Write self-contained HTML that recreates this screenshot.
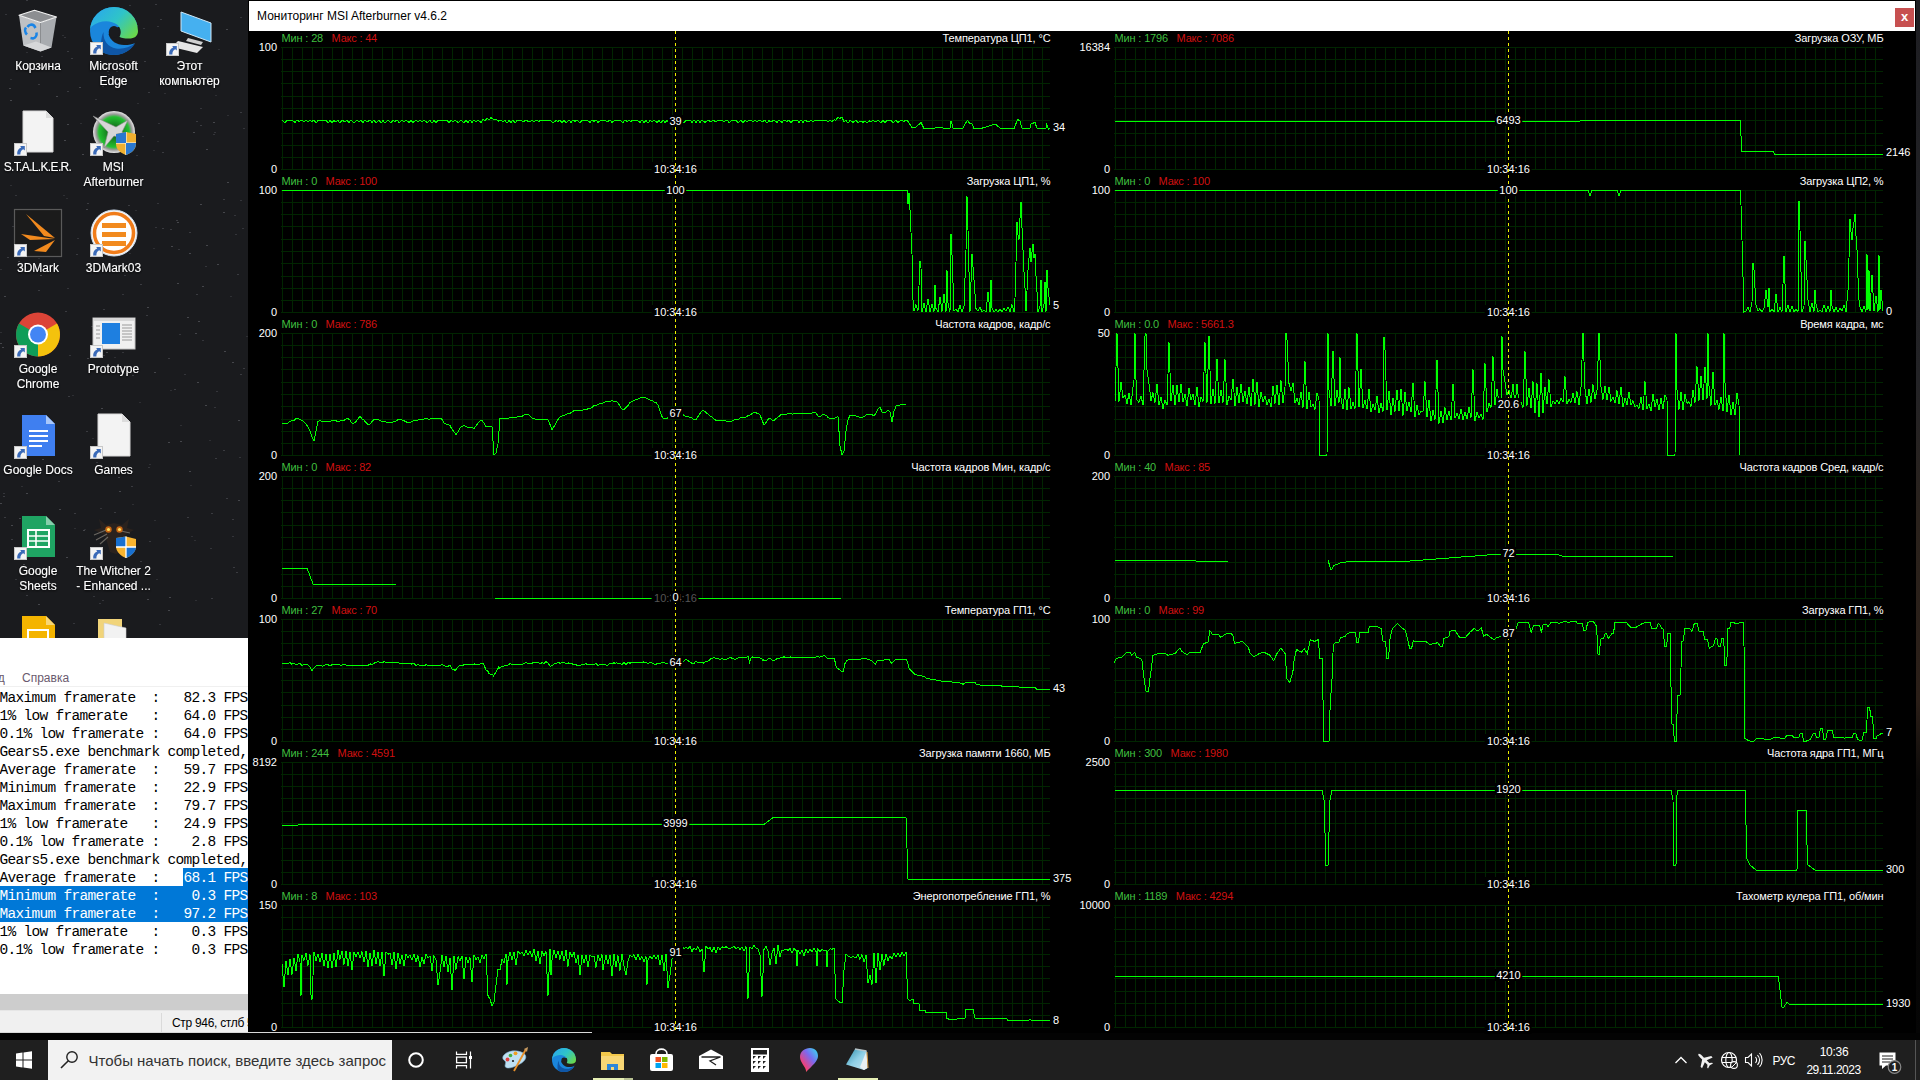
<!DOCTYPE html><html><head><meta charset="utf-8"><style>
*{margin:0;padding:0;box-sizing:border-box}
html,body{width:1920px;height:1080px;overflow:hidden;background:#030303}
body{position:relative;font-family:"Liberation Sans",sans-serif}
#desk{position:absolute;left:0;top:0;width:1920px;height:1033px;background:#1a1b1e}
#np{position:absolute;left:0;top:638px;width:592px;height:395px;background:#fff;overflow:hidden}
.npmenu{position:absolute;left:0;top:0;width:100%;height:49px;background:#fff;border-bottom:1px solid #f0f0f0}
.npmenu span{position:absolute;top:33px;font-size:12px;color:#6a5a6e;line-height:14px}
.npl{position:absolute;left:-0.5px;font-family:"Liberation Mono",monospace;font-size:14.5px;letter-spacing:-0.7px;line-height:18px;height:18px;color:#000;white-space:pre}
.npsel{position:absolute;background:#0078d7}
.npscroll{position:absolute;left:0;top:356px;width:100%;height:16px;background:#cdcdcd}
.npstatus{position:absolute;left:0;top:372px;width:100%;height:23px;background:#f0f0f0;border-top:1px solid #e6e6e6;border-bottom:1px solid #e3e3e3}
.npstatus span{position:absolute;left:172px;top:5px;font-size:12px;letter-spacing:-0.3px;color:#000;line-height:14px}
.npsep{position:absolute;left:161px;top:2px;width:1px;height:20px;background:#dadada}
#ab{position:absolute;left:248px;top:0;width:1668px;height:1033px;background:#000;border:1px solid #000}
#abtitle{position:absolute;left:0;top:0;width:100%;height:30px;background:#fff}
#abtitle span{position:absolute;left:8px;top:8px;font-size:12px;color:#000;line-height:14px}
#abclose{position:absolute;left:1646px;top:7px;width:19px;height:19px;background:#c75050;color:#fff;font-size:13px;font-weight:bold;text-align:center;line-height:17px}
#abcontent{position:absolute;left:0;top:0;width:1920px;height:1080px}
#tb{position:absolute;left:0;top:1040px;width:1920px;height:40px;background:#1f1f1f}
</style></head><body><div id="desk"><svg style="position:absolute;left:0;top:0" width="249" height="638" font-family="'Liberation Sans', sans-serif" font-size="12"><defs><linearGradient id="edg" x1="0" y1="0.2" x2="1" y2="0.8"><stop offset="0" stop-color="#2aa8ec"/><stop offset="0.5" stop-color="#2fc4c8"/><stop offset="1" stop-color="#6ad84a"/></linearGradient><linearGradient id="edg2" x1="0" y1="0" x2="1" y2="1"><stop offset="0" stop-color="#0c59a4"/><stop offset="1" stop-color="#1479d6"/></linearGradient><radialGradient id="msig" cx="0.5" cy="0.5" r="0.5"><stop offset="0" stop-color="#0e4a14"/><stop offset="0.72" stop-color="#22c030"/><stop offset="0.85" stop-color="#9a9a9a"/><stop offset="1" stop-color="#e8e8e8"/></radialGradient><filter id="tsh" x="-10%" y="-30%" width="120%" height="160%"><feDropShadow dx="0" dy="1" stdDeviation="0.8" flood-color="#000" flood-opacity="0.9"/></filter></defs><rect x="82" y="154" width="2" height="1" fill="#45464b"/><rect x="166" y="49" width="2" height="1" fill="#34353a"/><rect x="210" y="548" width="2" height="1" fill="#34353a"/><rect x="93" y="596" width="2" height="1" fill="#34353a"/><rect x="232" y="519" width="2" height="1" fill="#3a3b40"/><rect x="9" y="88" width="2" height="1" fill="#45464b"/><rect x="107" y="71" width="2" height="1" fill="#3a3b40"/><rect x="23" y="564" width="2" height="1" fill="#45464b"/><rect x="15" y="579" width="2" height="1" fill="#34353a"/><rect x="242" y="228" width="2" height="1" fill="#34353a"/><rect x="147" y="599" width="2" height="1" fill="#45464b"/><rect x="12" y="226" width="2" height="1" fill="#34353a"/><rect x="142" y="136" width="2" height="1" fill="#2e2f33"/><rect x="107" y="147" width="2" height="1" fill="#34353a"/><rect x="146" y="315" width="2" height="1" fill="#3a3b40"/><rect x="26" y="595" width="2" height="1" fill="#3a3b40"/><rect x="95" y="99" width="2" height="1" fill="#34353a"/><rect x="144" y="61" width="2" height="1" fill="#3a3b40"/><rect x="127" y="544" width="2" height="1" fill="#45464b"/><rect x="198" y="321" width="2" height="1" fill="#45464b"/><rect x="149" y="464" width="2" height="1" fill="#2e2f33"/><rect x="76" y="254" width="2" height="1" fill="#3a3b40"/><rect x="178" y="249" width="2" height="1" fill="#34353a"/><rect x="147" y="307" width="2" height="1" fill="#45464b"/><rect x="224" y="351" width="2" height="1" fill="#45464b"/><rect x="73" y="623" width="2" height="1" fill="#34353a"/><rect x="30" y="524" width="2" height="1" fill="#45464b"/><rect x="42" y="350" width="2" height="1" fill="#3a3b40"/><rect x="238" y="500" width="2" height="1" fill="#45464b"/><rect x="10" y="79" width="2" height="1" fill="#2e2f33"/><rect x="87" y="358" width="2" height="1" fill="#45464b"/><rect x="148" y="467" width="2" height="1" fill="#34353a"/><rect x="215" y="95" width="2" height="1" fill="#2e2f33"/><rect x="121" y="66" width="2" height="1" fill="#34353a"/><rect x="187" y="317" width="2" height="1" fill="#45464b"/><rect x="72" y="395" width="2" height="1" fill="#2e2f33"/><rect x="5" y="472" width="2" height="1" fill="#2e2f33"/><rect x="43" y="625" width="2" height="1" fill="#34353a"/><rect x="126" y="60" width="2" height="1" fill="#3a3b40"/><rect x="196" y="294" width="2" height="1" fill="#3a3b40"/><rect x="189" y="253" width="2" height="1" fill="#45464b"/><rect x="100" y="508" width="2" height="1" fill="#34353a"/><rect x="42" y="459" width="2" height="1" fill="#45464b"/><rect x="140" y="284" width="2" height="1" fill="#3a3b40"/><rect x="209" y="440" width="2" height="1" fill="#2e2f33"/><rect x="180" y="425" width="2" height="1" fill="#2e2f33"/><rect x="174" y="389" width="2" height="1" fill="#3a3b40"/><rect x="38" y="84" width="2" height="1" fill="#3a3b40"/><rect x="38" y="237" width="2" height="1" fill="#3a3b40"/><rect x="3" y="496" width="2" height="1" fill="#3a3b40"/><rect x="67" y="288" width="2" height="1" fill="#34353a"/><rect x="37" y="429" width="2" height="1" fill="#2e2f33"/><rect x="156" y="579" width="2" height="1" fill="#2e2f33"/><rect x="243" y="128" width="2" height="1" fill="#34353a"/><rect x="116" y="572" width="2" height="1" fill="#45464b"/><rect x="101" y="408" width="2" height="1" fill="#45464b"/><rect x="26" y="493" width="2" height="1" fill="#45464b"/><rect x="15" y="195" width="2" height="1" fill="#34353a"/><rect x="53" y="451" width="2" height="1" fill="#3a3b40"/><rect x="28" y="348" width="2" height="1" fill="#34353a"/><rect x="26" y="0" width="2" height="1" fill="#3a3b40"/><rect x="137" y="103" width="2" height="1" fill="#2e2f33"/><rect x="157" y="26" width="2" height="1" fill="#34353a"/><rect x="223" y="212" width="2" height="1" fill="#45464b"/><rect x="38" y="258" width="2" height="1" fill="#2e2f33"/><rect x="154" y="372" width="2" height="1" fill="#45464b"/><rect x="31" y="118" width="2" height="1" fill="#45464b"/><rect x="119" y="491" width="2" height="1" fill="#45464b"/><rect x="79" y="87" width="2" height="1" fill="#3a3b40"/><rect x="26" y="350" width="2" height="1" fill="#2e2f33"/><rect x="122" y="165" width="2" height="1" fill="#34353a"/><rect x="52" y="540" width="2" height="1" fill="#2e2f33"/><rect x="37" y="556" width="2" height="1" fill="#34353a"/><rect x="194" y="540" width="2" height="1" fill="#2e2f33"/><rect x="164" y="93" width="2" height="1" fill="#2e2f33"/><rect x="132" y="375" width="2" height="1" fill="#3a3b40"/><rect x="91" y="228" width="2" height="1" fill="#2e2f33"/><rect x="162" y="228" width="2" height="1" fill="#3a3b40"/><rect x="206" y="245" width="2" height="1" fill="#45464b"/><rect x="189" y="232" width="2" height="1" fill="#3a3b40"/><rect x="132" y="504" width="2" height="1" fill="#2e2f33"/><rect x="187" y="29" width="2" height="1" fill="#34353a"/><rect x="202" y="286" width="2" height="1" fill="#45464b"/><rect x="66" y="198" width="2" height="1" fill="#2e2f33"/><rect x="114" y="357" width="2" height="1" fill="#2e2f33"/><rect x="20" y="225" width="2" height="1" fill="#34353a"/><rect x="58" y="481" width="2" height="1" fill="#3a3b40"/><rect x="86" y="209" width="2" height="1" fill="#45464b"/><rect x="159" y="624" width="2" height="1" fill="#34353a"/><rect x="122" y="352" width="2" height="1" fill="#34353a"/><rect x="213" y="122" width="2" height="1" fill="#45464b"/><rect x="200" y="204" width="2" height="1" fill="#45464b"/><rect x="227" y="182" width="2" height="1" fill="#45464b"/><rect x="202" y="340" width="2" height="1" fill="#34353a"/><rect x="205" y="405" width="2" height="1" fill="#45464b"/><rect x="102" y="86" width="2" height="1" fill="#3a3b40"/><rect x="43" y="130" width="2" height="1" fill="#34353a"/><rect x="38" y="604" width="2" height="1" fill="#45464b"/><rect x="206" y="149" width="2" height="1" fill="#45464b"/><rect x="168" y="358" width="2" height="1" fill="#3a3b40"/><rect x="140" y="561" width="2" height="1" fill="#3a3b40"/><rect x="5" y="14" width="2" height="1" fill="#34353a"/><rect x="134" y="142" width="2" height="1" fill="#45464b"/><rect x="223" y="199" width="2" height="1" fill="#3a3b40"/><rect x="7" y="257" width="2" height="1" fill="#3a3b40"/><rect x="74" y="513" width="2" height="1" fill="#3a3b40"/><rect x="195" y="600" width="2" height="1" fill="#2e2f33"/><rect x="66" y="557" width="2" height="1" fill="#45464b"/><rect x="213" y="134" width="2" height="1" fill="#34353a"/><rect x="232" y="362" width="2" height="1" fill="#45464b"/><rect x="169" y="597" width="2" height="1" fill="#45464b"/><rect x="211" y="513" width="2" height="1" fill="#3a3b40"/><rect x="136" y="155" width="2" height="1" fill="#34353a"/><rect x="223" y="450" width="2" height="1" fill="#3a3b40"/><rect x="155" y="4" width="2" height="1" fill="#3a3b40"/><rect x="44" y="144" width="2" height="1" fill="#45464b"/><rect x="158" y="123" width="2" height="1" fill="#34353a"/><rect x="83" y="530" width="2" height="1" fill="#45464b"/><rect x="200" y="108" width="2" height="1" fill="#34353a"/><rect x="63" y="195" width="2" height="1" fill="#2e2f33"/><rect x="10" y="100" width="2" height="1" fill="#45464b"/><rect x="143" y="28" width="2" height="1" fill="#34353a"/><rect x="113" y="333" width="2" height="1" fill="#3a3b40"/><rect x="177" y="283" width="2" height="1" fill="#45464b"/><rect x="130" y="546" width="2" height="1" fill="#45464b"/><rect x="129" y="253" width="2" height="1" fill="#2e2f33"/><rect x="236" y="572" width="2" height="1" fill="#3a3b40"/><rect x="215" y="458" width="2" height="1" fill="#3a3b40"/><rect x="106" y="124" width="2" height="1" fill="#45464b"/><rect x="113" y="323" width="2" height="1" fill="#34353a"/><rect x="171" y="246" width="2" height="1" fill="#45464b"/><rect x="18" y="217" width="2" height="1" fill="#2e2f33"/><rect x="200" y="125" width="2" height="1" fill="#3a3b40"/><rect x="240" y="374" width="2" height="1" fill="#3a3b40"/><rect x="64" y="140" width="2" height="1" fill="#45464b"/><rect x="56" y="96" width="2" height="1" fill="#45464b"/><rect x="226" y="498" width="2" height="1" fill="#3a3b40"/><rect x="170" y="229" width="2" height="1" fill="#3a3b40"/><rect x="180" y="441" width="2" height="1" fill="#45464b"/><rect x="86" y="431" width="2" height="1" fill="#3a3b40"/><rect x="91" y="326" width="2" height="1" fill="#34353a"/><rect x="184" y="374" width="2" height="1" fill="#34353a"/><rect x="86" y="567" width="2" height="1" fill="#45464b"/><rect x="112" y="18" width="2" height="1" fill="#45464b"/><rect x="84" y="529" width="2" height="1" fill="#2e2f33"/><rect x="131" y="65" width="2" height="1" fill="#34353a"/><rect x="235" y="234" width="2" height="1" fill="#34353a"/><rect x="21" y="271" width="2" height="1" fill="#2e2f33"/><rect x="10" y="185" width="2" height="1" fill="#2e2f33"/><rect x="193" y="132" width="2" height="1" fill="#45464b"/><rect x="217" y="264" width="2" height="1" fill="#45464b"/><rect x="38" y="549" width="2" height="1" fill="#45464b"/><rect x="179" y="334" width="2" height="1" fill="#34353a"/><rect x="71" y="58" width="2" height="1" fill="#3a3b40"/><rect x="108" y="74" width="2" height="1" fill="#2e2f33"/><rect x="240" y="17" width="2" height="1" fill="#34353a"/><rect x="205" y="266" width="2" height="1" fill="#34353a"/><rect x="155" y="227" width="2" height="1" fill="#34353a"/><rect x="67" y="124" width="2" height="1" fill="#45464b"/><rect x="2" y="347" width="2" height="1" fill="#45464b"/><rect x="237" y="274" width="2" height="1" fill="#3a3b40"/><rect x="11" y="539" width="2" height="1" fill="#3a3b40"/><rect x="240" y="112" width="2" height="1" fill="#3a3b40"/><rect x="67" y="51" width="2" height="1" fill="#3a3b40"/><rect x="51" y="319" width="2" height="1" fill="#2e2f33"/><rect x="135" y="210" width="2" height="1" fill="#2e2f33"/><rect x="114" y="512" width="2" height="1" fill="#3a3b40"/><rect x="69" y="355" width="2" height="1" fill="#34353a"/><rect x="64" y="37" width="2" height="1" fill="#34353a"/><rect x="4" y="517" width="2" height="1" fill="#3a3b40"/><rect x="131" y="486" width="2" height="1" fill="#3a3b40"/><rect x="239" y="457" width="2" height="1" fill="#34353a"/><rect x="168" y="442" width="2" height="1" fill="#45464b"/><rect x="139" y="402" width="2" height="1" fill="#2e2f33"/><rect x="176" y="220" width="2" height="1" fill="#3a3b40"/><rect x="87" y="203" width="2" height="1" fill="#3a3b40"/><rect x="103" y="355" width="2" height="1" fill="#34353a"/><rect x="214" y="132" width="2" height="1" fill="#34353a"/><rect x="18" y="261" width="2" height="1" fill="#45464b"/><rect x="41" y="56" width="2" height="1" fill="#34353a"/><rect x="170" y="390" width="2" height="1" fill="#2e2f33"/><rect x="153" y="248" width="2" height="1" fill="#2e2f33"/><rect x="11" y="470" width="2" height="1" fill="#3a3b40"/><rect x="40" y="275" width="2" height="1" fill="#45464b"/><rect x="0" y="269" width="2" height="1" fill="#2e2f33"/><rect x="246" y="336" width="2" height="1" fill="#2e2f33"/><rect x="62" y="35" width="2" height="1" fill="#2e2f33"/><rect x="55" y="365" width="2" height="1" fill="#3a3b40"/><rect x="0" y="343" width="2" height="1" fill="#45464b"/><rect x="21" y="486" width="2" height="1" fill="#2e2f33"/><rect x="128" y="205" width="2" height="1" fill="#3a3b40"/><rect x="129" y="5" width="2" height="1" fill="#34353a"/><rect x="67" y="91" width="2" height="1" fill="#3a3b40"/><rect x="102" y="600" width="2" height="1" fill="#34353a"/><rect x="100" y="23" width="2" height="1" fill="#2e2f33"/><rect x="77" y="238" width="2" height="1" fill="#34353a"/><rect x="149" y="541" width="2" height="1" fill="#3a3b40"/><rect x="168" y="610" width="2" height="1" fill="#45464b"/><rect x="195" y="333" width="2" height="1" fill="#45464b"/><rect x="38" y="290" width="2" height="1" fill="#3a3b40"/><rect x="11" y="525" width="2" height="1" fill="#45464b"/><rect x="187" y="517" width="2" height="1" fill="#3a3b40"/><rect x="232" y="536" width="2" height="1" fill="#34353a"/><rect x="211" y="598" width="2" height="1" fill="#3a3b40"/><rect x="21" y="31" width="2" height="1" fill="#34353a"/><rect x="34" y="369" width="2" height="1" fill="#34353a"/><rect x="96" y="462" width="2" height="1" fill="#34353a"/><rect x="160" y="19" width="2" height="1" fill="#3a3b40"/><rect x="125" y="270" width="2" height="1" fill="#34353a"/><rect x="116" y="71" width="2" height="1" fill="#34353a"/><rect x="168" y="538" width="2" height="1" fill="#34353a"/><rect x="190" y="485" width="2" height="1" fill="#2e2f33"/><rect x="207" y="76" width="2" height="1" fill="#2e2f33"/><rect x="60" y="210" width="2" height="1" fill="#3a3b40"/><rect x="189" y="471" width="2" height="1" fill="#45464b"/><rect x="216" y="391" width="2" height="1" fill="#34353a"/><rect x="122" y="294" width="2" height="1" fill="#34353a"/><rect x="157" y="203" width="2" height="1" fill="#34353a"/><rect x="153" y="150" width="2" height="1" fill="#2e2f33"/><rect x="65" y="311" width="2" height="1" fill="#3a3b40"/><rect x="3" y="493" width="2" height="1" fill="#34353a"/><rect x="124" y="275" width="2" height="1" fill="#34353a"/><rect x="177" y="222" width="2" height="1" fill="#45464b"/><rect x="74" y="528" width="2" height="1" fill="#2e2f33"/><rect x="118" y="477" width="2" height="1" fill="#45464b"/><rect x="196" y="121" width="2" height="1" fill="#3a3b40"/><rect x="79" y="87" width="2" height="1" fill="#45464b"/><rect x="4" y="296" width="2" height="1" fill="#45464b"/><rect x="19" y="518" width="2" height="1" fill="#45464b"/><rect x="68" y="396" width="2" height="1" fill="#3a3b40"/><rect x="234" y="215" width="2" height="1" fill="#34353a"/><rect x="148" y="92" width="2" height="1" fill="#3a3b40"/><rect x="191" y="536" width="2" height="1" fill="#2e2f33"/><rect x="243" y="368" width="2" height="1" fill="#3a3b40"/><rect x="154" y="520" width="2" height="1" fill="#2e2f33"/><rect x="227" y="115" width="2" height="1" fill="#2e2f33"/><rect x="59" y="509" width="2" height="1" fill="#45464b"/><rect x="100" y="25" width="2" height="1" fill="#3a3b40"/><rect x="0" y="503" width="2" height="1" fill="#45464b"/><rect x="103" y="309" width="2" height="1" fill="#3a3b40"/><rect x="106" y="352" width="2" height="1" fill="#45464b"/><rect x="80" y="123" width="2" height="1" fill="#2e2f33"/><rect x="0" y="332" width="2" height="1" fill="#2e2f33"/><rect x="214" y="407" width="2" height="1" fill="#34353a"/><rect x="240" y="200" width="2" height="1" fill="#34353a"/><rect x="230" y="296" width="2" height="1" fill="#2e2f33"/><rect x="95" y="66" width="2" height="1" fill="#45464b"/><rect x="99" y="603" width="2" height="1" fill="#34353a"/><rect x="92" y="438" width="2" height="1" fill="#2e2f33"/><rect x="218" y="49" width="2" height="1" fill="#2e2f33"/><rect x="26" y="52" width="2" height="1" fill="#2e2f33"/><rect x="162" y="152" width="2" height="1" fill="#3a3b40"/><rect x="248" y="272" width="2" height="1" fill="#45464b"/><rect x="130" y="323" width="2" height="1" fill="#3a3b40"/><rect x="197" y="382" width="2" height="1" fill="#45464b"/><rect x="226" y="29" width="2" height="1" fill="#45464b"/><rect x="233" y="567" width="2" height="1" fill="#3a3b40"/><rect x="184" y="82" width="2" height="1" fill="#34353a"/><rect x="238" y="420" width="2" height="1" fill="#45464b"/><rect x="157" y="141" width="2" height="1" fill="#2e2f33"/><path d="M19 15.3 L40.5 22.5 L40.5 51.5 L23.3 45.5 Z" fill="#bfc1c4"/><path d="M40.5 22.5 L56.5 17 L51.5 47.5 L40.5 51.5 Z" fill="#a9acb0"/><path d="M19 15.3 L34.5 10.3 L56.5 17 L40.5 22.5 Z" fill="#8c8e91" stroke="#f2f2f2" stroke-width="1.2" stroke-linejoin="round"/><path d="M23.3 45.5 L36 41.5 L51.5 47.5 L40.5 51.5 Z" fill="#d6d7d9"/><path d="M27.5 27 C29 24.5 32 24 34 25.5 L35.5 28 M36.5 32.5 C37 35.5 35.5 38 33 38.5 L30.5 38 M27 34.5 C25 32.5 24.5 29.5 26 27.5" stroke="#1a84e6" stroke-width="2.6" fill="none"/><circle cx="114" cy="31" r="24" fill="#1a86dc"/><path d="M103.5 32 C103 41 108 47 116 48.5 C123 49.5 130 47 135 43.5 C130.5 51 122.5 55 114 55 C109 55 105 54 101.5 51.5 C100.5 45 101 37 103.5 32 Z" fill="#0f56a6"/><path d="M108.5 34 C110.5 41 116.5 45 124 45 C129 45 132.5 44.5 135.8 42.5 L139 36 L139 26 L118 27 Z" fill="#1a1b1e"/><path d="M90 31 A24 24 0 0 1 138 31 C138 36 134.5 38.5 129 38.5 C124 38.5 120.5 38 119.5 36.5 C121.5 34 121.5 28 117 24.5 C111 20 100 19.5 91.5 26.5 C90.8 27.8 90.3 29.3 90 31 Z" fill="url(#edg)"/><ellipse cx="114" cy="32" rx="5.3" ry="6" fill="#1a1b1e"/><g transform="translate(90,42)"><rect x="0.5" y="0.5" width="12" height="12" fill="#f4f4f4" stroke="#c8c8c8" stroke-width="1"/><path d="M3.2 11.5 C2.8 8 4.5 5.5 7.2 4.6 L6.2 3 H10.8 V7.6 L9.3 6.2 C7.3 7 6.2 9 6.4 11.5 Z" fill="#3a6ab8"/></g><path d="M181 12 L211 23 L211 42 L181 31 Z" fill="#45b0f0" stroke="#cfe8f8" stroke-width="1"/><path d="M178 41 L203 47 L197 53 L172 47 Z" fill="#e6e6e6"/><path d="M188 38 L203 42 L201 45 L186 41 Z" fill="#d0d0d0"/><g transform="translate(166,43)"><rect x="0.5" y="0.5" width="12" height="12" fill="#f4f4f4" stroke="#c8c8c8" stroke-width="1"/><path d="M3.2 11.5 C2.8 8 4.5 5.5 7.2 4.6 L6.2 3 H10.8 V7.6 L9.3 6.2 C7.3 7 6.2 9 6.4 11.5 Z" fill="#3a6ab8"/></g><path d="M23 111 H46 L53 118 V152 H23 Z" fill="#f3f3f3" stroke="#d8d8d8" stroke-width="1"/><path d="M46 111 V118 H53 Z" fill="#dcdcdc"/><g transform="translate(14,143)"><rect x="0.5" y="0.5" width="12" height="12" fill="#f4f4f4" stroke="#c8c8c8" stroke-width="1"/><path d="M3.2 11.5 C2.8 8 4.5 5.5 7.2 4.6 L6.2 3 H10.8 V7.6 L9.3 6.2 C7.3 7 6.2 9 6.4 11.5 Z" fill="#3a6ab8"/></g><circle cx="114" cy="132" r="21" fill="url(#msig)"/><path d="M93 116 L116 127 L128 120 L122 132 L130 140 L114 136 L104 148 L108 132 Z" fill="#d6d6d6" stroke="#888" stroke-width="0.6"/><path d="M116 134 L126 132 L136 134 L136 144 C136 150 131 153 126 155 C121 153 116 150 116 144 Z" fill="#f0b030"/><path d="M126 132 V155 M116 143 H136" stroke="#fff" stroke-width="1"/><path d="M116 134 L126 132 V143 H116 Z" fill="#2a78d0"/><path d="M126 143 H136 C136 150 131 153 126 155 Z" fill="#2a78d0"/><g transform="translate(90,143)"><rect x="0.5" y="0.5" width="12" height="12" fill="#f4f4f4" stroke="#c8c8c8" stroke-width="1"/><path d="M3.2 11.5 C2.8 8 4.5 5.5 7.2 4.6 L6.2 3 H10.8 V7.6 L9.3 6.2 C7.3 7 6.2 9 6.4 11.5 Z" fill="#3a6ab8"/></g><rect x="14.5" y="209.5" width="47" height="47" fill="#1b1b1b" stroke="#5a5a5a" stroke-width="1.2"/><path d="M26 214 L55 238 L44 236 Z" fill="#f28a1e"/><path d="M21 234 L55 239 L30 240 Z" fill="#f28a1e"/><path d="M34 251 L55 240 L46 252 Z" fill="#f28a1e"/><g transform="translate(14,244)"><rect x="0.5" y="0.5" width="12" height="12" fill="#f4f4f4" stroke="#c8c8c8" stroke-width="1"/><path d="M3.2 11.5 C2.8 8 4.5 5.5 7.2 4.6 L6.2 3 H10.8 V7.6 L9.3 6.2 C7.3 7 6.2 9 6.4 11.5 Z" fill="#3a6ab8"/></g><circle cx="114" cy="233" r="23" fill="#f5f5f5" stroke="#d0dff0" stroke-width="1"/><circle cx="114" cy="233" r="19.5" fill="#fff" stroke="#f07c1a" stroke-width="3.5"/><rect x="102" y="223" width="24" height="5" fill="#f28a1e"/><rect x="102" y="232" width="24" height="5" fill="#f28a1e"/><rect x="102" y="241" width="24" height="5" fill="#f28a1e"/><g transform="translate(90,244)"><rect x="0.5" y="0.5" width="12" height="12" fill="#f4f4f4" stroke="#c8c8c8" stroke-width="1"/><path d="M3.2 11.5 C2.8 8 4.5 5.5 7.2 4.6 L6.2 3 H10.8 V7.6 L9.3 6.2 C7.3 7 6.2 9 6.4 11.5 Z" fill="#3a6ab8"/></g><circle cx="38" cy="334.5" r="22" fill="#db4437"/><path d="M38 334.5 L57 323.5 A22 22 0 0 1 38 356.5 Z" fill="#f4c20d"/><path d="M38 334.5 L38 356.5 A22 22 0 0 1 19 323.5 Z" fill="#0f9d58"/><circle cx="38" cy="334.5" r="10" fill="#fff"/><circle cx="38" cy="334.5" r="8" fill="#4285f4"/><g transform="translate(14,345)"><rect x="0.5" y="0.5" width="12" height="12" fill="#f4f4f4" stroke="#c8c8c8" stroke-width="1"/><path d="M3.2 11.5 C2.8 8 4.5 5.5 7.2 4.6 L6.2 3 H10.8 V7.6 L9.3 6.2 C7.3 7 6.2 9 6.4 11.5 Z" fill="#3a6ab8"/></g><rect x="93" y="318" width="42" height="31" fill="#f0f0f0" stroke="#c4c4c4" stroke-width="1"/><rect x="93" y="318" width="42" height="3" fill="#d8d8d8"/><rect x="102" y="323" width="18" height="21" fill="#1e7fe0"/><path d="M96 326h4M96 330h4M96 334h4M96 338h4M122 325h10M122 328h10M122 331h10M122 334h10M122 337h10M122 340h10" stroke="#9a9a9a" stroke-width="1"/><g transform="translate(90,345)"><rect x="0.5" y="0.5" width="12" height="12" fill="#f4f4f4" stroke="#c8c8c8" stroke-width="1"/><path d="M3.2 11.5 C2.8 8 4.5 5.5 7.2 4.6 L6.2 3 H10.8 V7.6 L9.3 6.2 C7.3 7 6.2 9 6.4 11.5 Z" fill="#3a6ab8"/></g><path d="M22 415 H46 L55 424 V456 H22 Z" fill="#3f7ff0"/><path d="M46 415 V424 H55 Z" fill="#a8c7fa"/><path d="M29 431h19M29 436h19M29 441h19M29 446h13" stroke="#fff" stroke-width="2"/><g transform="translate(14,446)"><rect x="0.5" y="0.5" width="12" height="12" fill="#f4f4f4" stroke="#c8c8c8" stroke-width="1"/><path d="M3.2 11.5 C2.8 8 4.5 5.5 7.2 4.6 L6.2 3 H10.8 V7.6 L9.3 6.2 C7.3 7 6.2 9 6.4 11.5 Z" fill="#3a6ab8"/></g><path d="M98 414 H122 L130 422 V456 H98 Z" fill="#f3f3f3" stroke="#d8d8d8" stroke-width="1"/><path d="M122 414 V422 H130 Z" fill="#dcdcdc"/><g transform="translate(90,446)"><rect x="0.5" y="0.5" width="12" height="12" fill="#f4f4f4" stroke="#c8c8c8" stroke-width="1"/><path d="M3.2 11.5 C2.8 8 4.5 5.5 7.2 4.6 L6.2 3 H10.8 V7.6 L9.3 6.2 C7.3 7 6.2 9 6.4 11.5 Z" fill="#3a6ab8"/></g><path d="M22 516 H46 L55 525 V557 H22 Z" fill="#1fa463"/><path d="M46 516 V525 H55 Z" fill="#87ceac"/><rect x="28" y="530" width="21" height="17" fill="none" stroke="#fff" stroke-width="2"/><path d="M28 536h21M28 541h21M36 530v17" stroke="#fff" stroke-width="1.6"/><g transform="translate(14,547)"><rect x="0.5" y="0.5" width="12" height="12" fill="#f4f4f4" stroke="#c8c8c8" stroke-width="1"/><path d="M3.2 11.5 C2.8 8 4.5 5.5 7.2 4.6 L6.2 3 H10.8 V7.6 L9.3 6.2 C7.3 7 6.2 9 6.4 11.5 Z" fill="#3a6ab8"/></g><path d="M99 519 L106 525 L114 523 L122 525 L129 519 L127 528 L134 530 L125 535 L120 552 L116 554 L110 552 L105 535 L94 530 L101 528 Z" fill="#2a221e"/><path d="M94 535 L106 530 M96 540 L107 534 M100 544 L108 537 M130 533 L121 531" stroke="#6a6660" stroke-width="1.1"/><circle cx="108.5" cy="529.5" r="3.2" fill="#e07010" opacity="0.85"/><circle cx="108.5" cy="529.5" r="1.6" fill="#ffe060"/><circle cx="119.5" cy="529.5" r="3.2" fill="#e07010" opacity="0.85"/><circle cx="119.5" cy="529.5" r="1.6" fill="#ffe060"/><path d="M116 538 L126 536.5 L136 539 L136 546 C136 552 131 556 126 558 C121 556 116 552 116 546 Z" fill="#f8b430"/><path d="M116 538 L126 536.5 V547 H116 Z" fill="#1870d0"/><path d="M126 547 H136 C136 552 131 556 126 558 Z" fill="#1870d0"/><path d="M126 536.5 V558 M116 547 H136" stroke="#fff" stroke-width="1.3"/><g transform="translate(90,547)"><rect x="0.5" y="0.5" width="12" height="12" fill="#f4f4f4" stroke="#c8c8c8" stroke-width="1"/><path d="M3.2 11.5 C2.8 8 4.5 5.5 7.2 4.6 L6.2 3 H10.8 V7.6 L9.3 6.2 C7.3 7 6.2 9 6.4 11.5 Z" fill="#3a6ab8"/></g><path d="M22 616 H46 L55 625 V640 H22 Z" fill="#f4b400"/><path d="M46 616 V625 H55 Z" fill="#f8d675"/><rect x="28" y="630" width="20" height="10" fill="none" stroke="#fff" stroke-width="2"/><path d="M98 619 H122 V640 H98 Z" fill="#f1d47a"/><path d="M104 623 L126 628 V640 H104 Z" fill="#f2f2f2" stroke="#ccc" stroke-width="0.6"/><g fill="#fff" filter="url(#tsh)"><text x="38" y="69.5" text-anchor="middle">Корзина</text><text x="113.5" y="69.5" text-anchor="middle">Microsoft</text><text x="113.5" y="84.5" text-anchor="middle">Edge</text><text x="189.5" y="69.5" text-anchor="middle">Этот</text><text x="189.5" y="84.5" text-anchor="middle">компьютер</text><text x="37.5" y="170.5" text-anchor="middle" letter-spacing="-0.65">S.T.A.L.K.E.R.</text><text x="113.5" y="170.5" text-anchor="middle">MSI</text><text x="113.5" y="185.5" text-anchor="middle">Afterburner</text><text x="38" y="271.5" text-anchor="middle">3DMark</text><text x="113.5" y="271.5" text-anchor="middle">3DMark03</text><text x="38" y="372.5" text-anchor="middle">Google</text><text x="38" y="387.5" text-anchor="middle">Chrome</text><text x="113.5" y="372.5" text-anchor="middle">Prototype</text><text x="38" y="473.5" text-anchor="middle">Google Docs</text><text x="113.5" y="473.5" text-anchor="middle">Games</text><text x="38" y="574.5" text-anchor="middle">Google</text><text x="38" y="589.5" text-anchor="middle">Sheets</text><text x="113.5" y="574.5" text-anchor="middle">The Witcher 2</text><text x="113.5" y="589.5" text-anchor="middle">- Enhanced ...</text></g></svg></div><div style="position:absolute;left:1915px;top:0;width:5px;height:1033px;background:linear-gradient(#1e1e22 0px,#232326 380px,#2a221c 520px,#2b1f18 700px,#0c0a09 780px,#050505 1033px)"></div><div id="np"><div class="npmenu"><span style="left:-9px">ид</span><span style="left:22px">Справка</span></div><div class="npsel" style="top:230px;left:183px;width:66px;height:18px"></div><div class="npsel" style="top:248px;left:0;width:249px;height:36px"></div><div class="npl" style="top:51px">Maximum framerate  :   82.3 FPS</div><div class="npl" style="top:69px">1% low framerate   :   64.0 FPS</div><div class="npl" style="top:87px">0.1% low framerate :   64.0 FPS</div><div class="npl" style="top:105px">Gears5.exe benchmark completed,</div><div class="npl" style="top:123px">Average framerate  :   59.7 FPS</div><div class="npl" style="top:141px">Minimum framerate  :   22.9 FPS</div><div class="npl" style="top:159px">Maximum framerate  :   79.7 FPS</div><div class="npl" style="top:177px">1% low framerate   :   24.9 FPS</div><div class="npl" style="top:195px">0.1% low framerate :    2.8 FPS</div><div class="npl" style="top:213px">Gears5.exe benchmark completed,</div><div class="npl" style="top:231px">Average framerate  :   <span style="color:#fff">68.1 FPS</span></div><div class="npl" style="top:249px;color:#fff">Minimum framerate  :    0.3 FPS</div><div class="npl" style="top:267px;color:#fff">Maximum framerate  :   97.2 FPS</div><div class="npl" style="top:285px">1% low framerate   :    0.3 FPS</div><div class="npl" style="top:303px">0.1% low framerate :    0.3 FPS</div><div class="npscroll"></div><div class="npstatus"><div class="npsep"></div><span>Стр 946, стлб 5</span></div></div><div id="ab"><div id="abtitle"><span>Мониторинг MSI Afterburner v4.6.2</span><div id="abclose">x</div></div></div><svg style="position:absolute;left:0;top:0" width="1920" height="1080" font-family='"Liberation Sans", sans-serif' font-size="11"><path d="M281 47.5H1050M281 59.5H1050M281 71.5H1050M281 83.5H1050M281 96.5H1050M281 108.5H1050M281 120.5H1050M281 133.5H1050M281 145.5H1050M281 157.5H1050M281 169.5H1050M282.5 47V170M292.5 47V170M302.5 47V170M312.5 47V170M322.5 47V170M332.5 47V170M342.5 47V170M352.5 47V170M362.5 47V170M372.5 47V170M382.5 47V170M392.5 47V170M402.5 47V170M412.5 47V170M422.5 47V170M432.5 47V170M442.5 47V170M452.5 47V170M462.5 47V170M472.5 47V170M482.5 47V170M492.5 47V170M502.5 47V170M512.5 47V170M522.5 47V170M532.5 47V170M542.5 47V170M552.5 47V170M562.5 47V170M572.5 47V170M582.5 47V170M592.5 47V170M602.5 47V170M612.5 47V170M622.5 47V170M632.5 47V170M642.5 47V170M652.5 47V170M662.5 47V170M672.5 47V170M682.5 47V170M692.5 47V170M702.5 47V170M712.5 47V170M722.5 47V170M732.5 47V170M742.5 47V170M752.5 47V170M762.5 47V170M772.5 47V170M782.5 47V170M792.5 47V170M802.5 47V170M812.5 47V170M822.5 47V170M832.5 47V170M842.5 47V170M852.5 47V170M862.5 47V170M872.5 47V170M882.5 47V170M892.5 47V170M902.5 47V170M912.5 47V170M922.5 47V170M932.5 47V170M942.5 47V170M952.5 47V170M962.5 47V170M972.5 47V170M982.5 47V170M992.5 47V170M1002.5 47V170M1012.5 47V170M1022.5 47V170M1032.5 47V170M1042.5 47V170" stroke="#012501" stroke-width="1" fill="none" shape-rendering="crispEdges"/><polyline points="282.0,120.0 285.0,123.0 287.0,120.0 290.0,120.5 292.0,120.0 295.0,122.5 297.0,120.0 299.0,121.5 302.0,120.0 304.0,121.5 306.0,120.5 308.0,122.0 310.0,120.0 312.0,121.5 314.0,120.0 316.0,123.0 318.0,120.5 320.0,120.5 322.0,120.0 324.0,120.5 326.0,120.0 328.0,123.0 330.0,120.5 332.0,122.5 334.0,120.5 336.0,122.0 338.0,120.5 340.0,123.0 342.0,120.0 345.0,122.0 347.0,120.5 349.0,122.5 351.0,120.0 354.0,123.0 357.0,120.0 359.0,121.5 361.0,120.5 363.0,122.5 365.0,120.0 367.0,122.0 370.0,120.0 372.0,122.5 374.0,120.0 376.0,123.0 379.0,120.0 381.0,123.0 383.0,120.5 385.0,123.0 388.0,120.0 391.0,123.0 393.0,120.0 395.0,121.5 397.0,120.0 399.0,122.5 402.0,120.5 404.0,122.0 406.0,120.0 409.0,122.5 411.0,120.5 413.0,122.5 416.0,120.0 418.0,122.0 420.0,120.5 422.0,122.0 424.0,120.0 427.0,122.5 430.0,120.5 432.0,123.0 434.0,120.5 436.0,122.5 438.0,120.5 440.0,120.5 442.0,120.0 444.0,120.5 447.0,120.0 449.0,123.0 451.0,120.0 453.0,122.0 455.0,120.0 458.0,122.5 461.0,120.5 464.0,122.5 466.0,120.5 468.0,122.5 470.0,120.0 472.0,122.5 474.0,120.0 476.0,122.0 478.0,120.0 481.0,122.5 483.0,119.5 485.0,121.0 487.0,118.4 489.0,119.8 491.0,117.7 494.0,120.0 496.0,118.8 498.0,121.2 501.0,120.0 503.0,122.0 505.0,120.5 507.0,123.0 509.0,120.5 511.0,122.5 513.0,120.0 515.0,123.0 517.0,120.5 519.0,120.5 521.0,120.0 523.0,122.0 526.0,120.0 529.0,122.0 532.0,120.5 534.0,121.5 537.0,120.0 539.0,121.5 541.0,120.0 543.0,120.5 545.0,120.0 548.0,120.5 550.0,120.0 553.0,123.0 556.0,120.5 558.0,121.5 560.0,120.0 562.0,123.0 564.0,120.0 566.0,123.0 569.0,120.0 571.0,122.5 573.0,120.0 575.0,121.5 577.0,120.0 580.0,123.0 582.0,120.0 585.0,120.5 587.0,120.0 590.0,122.5 592.0,120.0 594.0,121.5 596.0,120.0 598.0,122.5 601.0,120.0 603.0,120.5 605.0,120.0 607.0,122.0 610.0,120.0 612.0,122.5 615.0,120.0 618.0,120.5 620.0,120.5 623.0,122.5 625.0,120.0 627.0,121.5 629.0,120.5 631.0,121.5 633.0,120.0 635.0,120.5 637.0,120.0 640.0,122.5 642.0,120.0 644.0,122.5 646.0,120.5 648.0,123.0 650.0,120.5 652.0,122.0 654.0,120.0 657.0,122.5 659.0,120.5 661.0,123.0 663.0,120.0 665.0,122.5 667.0,120.5 669.0,123.0 671.0,120.0 674.0,120.5 677.0,120.0 680.0,123.0 682.0,120.5 684.0,123.0 686.0,120.0 688.0,120.5 690.0,120.0 692.0,122.5 694.0,120.0 696.0,122.5 698.0,120.0 700.0,122.5 702.0,120.0 705.0,122.5 708.0,120.0 711.0,122.0 713.0,120.0 716.0,122.0 718.0,120.5 720.0,120.5 722.0,120.0 724.0,121.5 727.0,120.0 729.0,122.5 732.0,120.5 734.0,120.5 736.0,120.5 738.0,122.5 741.0,120.5 743.0,122.5 745.0,120.5 747.0,121.5 750.0,120.0 753.0,121.5 755.0,120.5 757.0,121.5 760.0,120.0 762.0,121.5 765.0,120.5 767.0,123.0 769.0,120.5 771.0,122.0 774.0,120.0 777.0,122.5 779.0,120.0 782.0,122.5 784.0,120.0 787.0,121.5 789.0,120.0 791.0,123.0 793.0,120.0 795.0,120.5 797.0,120.0 799.0,122.5 801.0,120.0 803.0,122.5 805.0,120.0 808.0,122.0 811.0,120.5 813.0,121.5 815.0,120.5 817.0,120.5 820.0,120.0 823.0,120.5 826.0,120.5 828.0,121.5 830.0,120.5 832.0,121.5 834.0,119.8 836.0,120.2 838.0,117.0 840.0,118.5 842.0,117.0 844.0,121.8 846.0,120.5 848.0,123.0 850.0,120.5 853.0,122.4 856.0,120.4 858.0,122.9 861.0,120.9 863.0,122.4 865.0,120.8 867.0,122.8 869.0,120.8 871.0,121.8 873.0,120.3 876.0,122.2 878.0,120.2 881.0,122.7 883.0,120.2 885.0,122.7 887.0,120.2 889.0,120.6 891.0,120.6 893.0,122.6 896.0,120.1 898.0,122.6 901.0,120.0 904.0,121.5 906.0,120.0 907.5,120.6 912.0,127.5 915.0,128.0 921.0,122.5 923.8,128.0 935.0,128.0 937.0,127.0 939.0,128.0 941.0,127.0 943.0,128.0 950.0,128.0 951.0,120.6 953.0,128.0 963.0,128.0 965.6,123.0 967.5,120.6 970.0,123.8 972.0,123.8 973.8,128.0 982.5,128.0 993.8,124.4 995.6,124.4 1000.0,128.0 1014.4,128.0 1017.5,119.4 1020.0,121.2 1021.9,128.0 1030.0,128.0 1031.0,123.8 1035.0,122.5 1036.9,128.0 1046.0,128.0 1046.5,124.4 1048.8,129.4 1050.0,128.0" fill="none" stroke="#00ff00" stroke-width="1" shape-rendering="crispEdges"/><text x="281.5" y="42" fill="#3fbf3f" letter-spacing="-0.15">Мин : 28</text><text x="331.6" y="42" fill="#d01010" letter-spacing="-0.2">Макс : 44</text><text x="1050.5" y="42" fill="#fff" text-anchor="end" letter-spacing="-0.12">Температура ЦП1, °С</text><text x="277" y="51" fill="#fff" text-anchor="end">100</text><text x="277" y="173" fill="#fff" text-anchor="end">0</text><rect x="651.6" y="162" width="46.9" height="14" fill="#000"/><text x="675.5" y="173" fill="#fff" text-anchor="middle">10:34:16</text><text x="1053" y="131" fill="#fff">34</text><path d="M281 190.5H1050M281 202.5H1050M281 214.5H1050M281 226.5H1050M281 239.5H1050M281 251.5H1050M281 263.5H1050M281 276.5H1050M281 288.5H1050M281 300.5H1050M281 312.5H1050M282.5 190V313M292.5 190V313M302.5 190V313M312.5 190V313M322.5 190V313M332.5 190V313M342.5 190V313M352.5 190V313M362.5 190V313M372.5 190V313M382.5 190V313M392.5 190V313M402.5 190V313M412.5 190V313M422.5 190V313M432.5 190V313M442.5 190V313M452.5 190V313M462.5 190V313M472.5 190V313M482.5 190V313M492.5 190V313M502.5 190V313M512.5 190V313M522.5 190V313M532.5 190V313M542.5 190V313M552.5 190V313M562.5 190V313M572.5 190V313M582.5 190V313M592.5 190V313M602.5 190V313M612.5 190V313M622.5 190V313M632.5 190V313M642.5 190V313M652.5 190V313M662.5 190V313M672.5 190V313M682.5 190V313M692.5 190V313M702.5 190V313M712.5 190V313M722.5 190V313M732.5 190V313M742.5 190V313M752.5 190V313M762.5 190V313M772.5 190V313M782.5 190V313M792.5 190V313M802.5 190V313M812.5 190V313M822.5 190V313M832.5 190V313M842.5 190V313M852.5 190V313M862.5 190V313M872.5 190V313M882.5 190V313M892.5 190V313M902.5 190V313M912.5 190V313M922.5 190V313M932.5 190V313M942.5 190V313M952.5 190V313M962.5 190V313M972.5 190V313M982.5 190V313M992.5 190V313M1002.5 190V313M1012.5 190V313M1022.5 190V313M1032.5 190V313M1042.5 190V313" stroke="#012501" stroke-width="1" fill="none" shape-rendering="crispEdges"/><polyline points="282.0,190.0 906.0,190.0 907.0,190.0 908.0,204.0 909.0,193.0 910.0,210.0 912.0,254.0 913.0,300.0 914.0,311.1 916.0,304.6 918.0,311.1 920.0,261.0 921.0,268.0 922.0,312.0 924.0,303.4 926.0,312.0 928.0,298.8 930.0,312.0 932.0,304.4 934.0,312.0 935.0,285.0 936.0,308.6 938.0,312.0 940.0,297.1 942.0,311.5 944.0,293.8 946.0,312.0 947.0,270.0 948.0,303.1 950.0,312.0 951.0,234.0 952.0,255.0 954.0,310.8 956.0,309.2 958.0,311.7 960.0,305.4 962.0,312.0 964.0,306.8 966.0,250.0 967.0,196.0 968.0,230.0 970.0,311.9 972.0,254.0 974.0,280.0 976.0,308.4 978.0,311.3 980.0,307.0 982.0,312.0 984.0,310.4 986.0,312.0 988.0,292.1 990.0,312.0 991.0,280.0 992.0,307.9 994.0,312.0 996.0,309.4 998.0,312.0 1000.0,309.3 1002.0,312.0 1004.0,308.1 1006.0,311.2 1008.0,306.7 1010.0,312.0 1012.0,304.6 1014.0,312.0 1015.0,298.0 1016.0,262.0 1017.0,222.0 1018.0,235.0 1019.0,240.0 1020.0,218.0 1021.0,202.0 1022.0,228.0 1023.0,250.0 1024.0,272.0 1025.0,288.0 1026.0,311.3 1028.0,270.0 1029.0,258.0 1030.0,248.0 1031.0,262.0 1032.0,252.0 1033.0,244.0 1034.0,258.0 1035.0,254.0 1036.0,276.0 1037.0,292.0 1038.0,312.0 1040.0,306.6 1041.0,280.0 1042.0,312.0 1044.0,304.4 1045.0,282.0 1046.0,312.0 1047.0,270.0 1048.0,288.2 1050.0,305.0" fill="none" stroke="#00ff00" stroke-width="1" shape-rendering="crispEdges"/><text x="281.5" y="185" fill="#3fbf3f" letter-spacing="-0.15">Мин : 0</text><text x="325.6" y="185" fill="#d01010" letter-spacing="-0.2">Макс : 100</text><text x="1050.5" y="185" fill="#fff" text-anchor="end" letter-spacing="-0.12">Загрузка ЦП1, %</text><text x="277" y="194" fill="#fff" text-anchor="end">100</text><text x="277" y="316" fill="#fff" text-anchor="end">0</text><rect x="651.6" y="305" width="46.9" height="14" fill="#000"/><text x="675.5" y="316" fill="#fff" text-anchor="middle">10:34:16</text><text x="1053" y="309" fill="#fff">5</text><path d="M281 333.5H1050M281 345.5H1050M281 357.5H1050M281 369.5H1050M281 382.5H1050M281 394.5H1050M281 406.5H1050M281 419.5H1050M281 431.5H1050M281 443.5H1050M281 455.5H1050M282.5 333V456M292.5 333V456M302.5 333V456M312.5 333V456M322.5 333V456M332.5 333V456M342.5 333V456M352.5 333V456M362.5 333V456M372.5 333V456M382.5 333V456M392.5 333V456M402.5 333V456M412.5 333V456M422.5 333V456M432.5 333V456M442.5 333V456M452.5 333V456M462.5 333V456M472.5 333V456M482.5 333V456M492.5 333V456M502.5 333V456M512.5 333V456M522.5 333V456M532.5 333V456M542.5 333V456M552.5 333V456M562.5 333V456M572.5 333V456M582.5 333V456M592.5 333V456M602.5 333V456M612.5 333V456M622.5 333V456M632.5 333V456M642.5 333V456M652.5 333V456M662.5 333V456M672.5 333V456M682.5 333V456M692.5 333V456M702.5 333V456M712.5 333V456M722.5 333V456M732.5 333V456M742.5 333V456M752.5 333V456M762.5 333V456M772.5 333V456M782.5 333V456M792.5 333V456M802.5 333V456M812.5 333V456M822.5 333V456M832.5 333V456M842.5 333V456M852.5 333V456M862.5 333V456M872.5 333V456M882.5 333V456M892.5 333V456M902.5 333V456M912.5 333V456M922.5 333V456M932.5 333V456M942.5 333V456M952.5 333V456M962.5 333V456M972.5 333V456M982.5 333V456M992.5 333V456M1002.5 333V456M1012.5 333V456M1022.5 333V456M1032.5 333V456M1042.5 333V456" stroke="#012501" stroke-width="1" fill="none" shape-rendering="crispEdges"/><polyline points="282.0,423.6 284.0,423.4 286.0,423.8 288.0,422.9 290.0,421.3 292.0,420.8 294.0,420.3 296.0,418.7 298.0,418.6 300.0,419.7 302.0,420.3 304.0,422.1 306.0,424.3 308.0,426.7 310.0,431.1 312.0,436.8 314.0,440.8 316.0,431.0 318.0,421.4 320.0,420.7 322.0,421.6 324.0,421.5 326.0,421.1 328.0,421.3 330.0,421.4 332.0,420.6 334.0,420.9 336.0,420.8 338.0,421.6 340.0,420.9 342.0,420.9 344.0,420.4 346.0,419.1 348.0,418.5 350.0,420.2 352.0,423.2 354.0,423.2 356.0,421.7 358.0,418.7 360.0,416.2 362.0,418.8 364.0,420.1 366.0,422.6 368.0,424.4 370.0,423.9 372.0,421.7 374.0,419.7 376.0,419.0 378.0,419.3 380.0,420.8 382.0,421.4 384.0,421.0 386.0,422.0 388.0,422.3 390.0,423.1 392.0,422.6 394.0,421.0 396.0,421.2 398.0,419.4 400.0,419.0 402.0,420.0 404.0,420.6 406.0,421.9 408.0,422.3 410.0,422.9 412.0,421.3 414.0,420.6 416.0,420.5 418.0,420.0 420.0,419.5 422.0,420.1 424.0,419.0 426.0,418.7 428.0,419.0 430.0,419.1 432.0,418.3 434.0,418.6 436.0,418.1 438.0,418.1 440.0,418.4 442.0,419.2 444.0,423.1 446.0,423.9 448.0,424.5 450.0,425.6 452.0,429.3 454.0,431.8 456.0,434.5 458.0,432.1 460.0,428.0 462.0,426.2 464.0,425.6 466.0,426.7 468.0,427.4 470.0,427.3 472.0,427.7 474.0,428.6 476.0,425.7 478.0,423.2 480.0,421.0 482.0,420.2 484.0,423.3 486.0,426.9 488.0,426.6 490.0,426.6 492.0,426.4 494.0,454.7 496.0,453.0 498.0,443.7 500.0,418.6 502.0,418.9 504.0,419.0 506.0,418.2 508.0,418.3 510.0,417.9 512.0,417.8 514.0,417.5 516.0,417.3 518.0,416.7 520.0,416.5 522.0,416.5 524.0,414.8 526.0,414.7 528.0,414.2 530.0,415.8 532.0,418.1 534.0,418.5 536.0,419.6 538.0,419.0 540.0,419.4 542.0,419.9 544.0,419.2 546.0,419.1 548.0,419.8 550.0,424.5 552.0,429.9 554.0,426.4 556.0,423.2 558.0,419.4 560.0,417.1 562.0,415.9 564.0,416.0 566.0,414.2 568.0,413.9 570.0,413.3 572.0,411.9 574.0,410.8 576.0,410.7 578.0,410.6 580.0,410.1 582.0,410.4 584.0,409.6 586.0,410.1 588.0,408.7 590.0,408.5 592.0,407.4 594.0,405.6 596.0,405.9 598.0,404.3 600.0,403.4 602.0,403.4 604.0,402.5 606.0,401.7 608.0,401.2 610.0,401.5 612.0,400.7 614.0,401.6 616.0,401.2 618.0,402.7 620.0,406.3 622.0,409.0 624.0,409.4 626.0,407.4 628.0,405.4 630.0,402.3 632.0,401.9 634.0,400.5 636.0,399.8 638.0,399.2 640.0,398.1 642.0,397.7 644.0,397.0 646.0,397.8 648.0,399.0 650.0,400.1 652.0,400.4 654.0,402.0 656.0,402.4 658.0,405.2 660.0,411.0 662.0,416.7 664.0,418.8 666.0,419.0 668.0,417.7 670.0,415.6 672.0,412.5 674.0,409.8 676.0,409.8 678.0,410.7 680.0,412.1 682.0,413.5 684.0,415.3 686.0,416.4 688.0,416.8 690.0,417.1 692.0,418.1 694.0,419.6 696.0,420.0 698.0,416.6 700.0,413.6 702.0,410.8 704.0,411.0 706.0,412.5 708.0,414.1 710.0,415.9 712.0,416.8 714.0,418.8 716.0,420.3 718.0,420.6 720.0,420.7 722.0,421.0 724.0,420.5 726.0,421.0 728.0,421.0 730.0,421.1 732.0,421.1 734.0,420.1 736.0,419.4 738.0,419.6 740.0,418.1 742.0,417.3 744.0,417.0 746.0,417.0 748.0,415.7 750.0,414.9 752.0,413.6 754.0,412.3 756.0,412.8 758.0,413.7 760.0,414.6 762.0,420.2 764.0,424.9 766.0,422.6 768.0,419.4 770.0,418.0 772.0,420.0 774.0,420.3 776.0,418.7 778.0,417.2 780.0,415.4 782.0,414.0 784.0,414.7 786.0,414.2 788.0,413.9 790.0,413.6 792.0,414.1 794.0,413.8 796.0,413.7 798.0,413.5 800.0,413.4 802.0,413.4 804.0,413.2 806.0,413.5 808.0,413.9 810.0,413.6 812.0,412.9 814.0,412.9 816.0,413.0 818.0,415.8 820.0,417.1 822.0,414.8 824.0,414.6 826.0,415.2 828.0,417.4 830.0,419.1 832.0,418.1 834.0,418.5 836.0,417.8 838.0,416.6 840.0,446.0 842.0,454.9 844.0,451.5 846.0,431.2 848.0,419.7 850.0,415.4 852.0,415.1 854.0,415.8 856.0,416.0 858.0,416.6 860.0,417.4 862.0,417.7 864.0,416.6 866.0,415.0 868.0,414.3 870.0,414.7 872.0,414.7 874.0,415.8 876.0,413.1 878.0,409.0 880.0,406.8 882.0,412.1 884.0,413.2 886.0,412.1 888.0,410.2 890.0,412.0 892.0,421.9 894.0,411.3 896.0,406.0 898.0,405.9 900.0,404.9 902.0,404.6 904.0,404.7 906.0,404.2" fill="none" stroke="#00ff00" stroke-width="1" shape-rendering="crispEdges"/><text x="281.5" y="328" fill="#3fbf3f" letter-spacing="-0.15">Мин : 0</text><text x="325.6" y="328" fill="#d01010" letter-spacing="-0.2">Макс : 786</text><text x="1050.5" y="328" fill="#fff" text-anchor="end" letter-spacing="-0.12">Частота кадров, кадр/с</text><text x="277" y="337" fill="#fff" text-anchor="end">200</text><text x="277" y="459" fill="#fff" text-anchor="end">0</text><rect x="651.6" y="448" width="46.9" height="14" fill="#000"/><text x="675.5" y="459" fill="#fff" text-anchor="middle">10:34:16</text><path d="M281 476.5H1050M281 488.5H1050M281 500.5H1050M281 512.5H1050M281 525.5H1050M281 537.5H1050M281 549.5H1050M281 562.5H1050M281 574.5H1050M281 586.5H1050M281 598.5H1050M282.5 476V599M292.5 476V599M302.5 476V599M312.5 476V599M322.5 476V599M332.5 476V599M342.5 476V599M352.5 476V599M362.5 476V599M372.5 476V599M382.5 476V599M392.5 476V599M402.5 476V599M412.5 476V599M422.5 476V599M432.5 476V599M442.5 476V599M452.5 476V599M462.5 476V599M472.5 476V599M482.5 476V599M492.5 476V599M502.5 476V599M512.5 476V599M522.5 476V599M532.5 476V599M542.5 476V599M552.5 476V599M562.5 476V599M572.5 476V599M582.5 476V599M592.5 476V599M602.5 476V599M612.5 476V599M622.5 476V599M632.5 476V599M642.5 476V599M652.5 476V599M662.5 476V599M672.5 476V599M682.5 476V599M692.5 476V599M702.5 476V599M712.5 476V599M722.5 476V599M732.5 476V599M742.5 476V599M752.5 476V599M762.5 476V599M772.5 476V599M782.5 476V599M792.5 476V599M802.5 476V599M812.5 476V599M822.5 476V599M832.5 476V599M842.5 476V599M852.5 476V599M862.5 476V599M872.5 476V599M882.5 476V599M892.5 476V599M902.5 476V599M912.5 476V599M922.5 476V599M932.5 476V599M942.5 476V599M952.5 476V599M962.5 476V599M972.5 476V599M982.5 476V599M992.5 476V599M1002.5 476V599M1012.5 476V599M1022.5 476V599M1032.5 476V599M1042.5 476V599" stroke="#012501" stroke-width="1" fill="none" shape-rendering="crispEdges"/><polyline points="282.0,568.0 307.0,568.0 310.0,576.0 313.0,584.0 396.0,584.0" fill="none" stroke="#00ff00" stroke-width="1" shape-rendering="crispEdges"/><polyline points="495.0,598.0 841.0,598.0" fill="none" stroke="#00ff00" stroke-width="1" shape-rendering="crispEdges"/><text x="281.5" y="471" fill="#3fbf3f" letter-spacing="-0.15">Мин : 0</text><text x="325.6" y="471" fill="#d01010" letter-spacing="-0.2">Макс : 82</text><text x="1050.5" y="471" fill="#fff" text-anchor="end" letter-spacing="-0.12">Частота кадров Мин, кадр/с</text><text x="277" y="480" fill="#fff" text-anchor="end">200</text><text x="277" y="602" fill="#fff" text-anchor="end">0</text><rect x="651.6" y="591" width="46.9" height="14" fill="#000"/><text x="675.5" y="602" fill="#555" text-anchor="middle">10:34:16</text><path d="M281 619.5H1050M281 631.5H1050M281 643.5H1050M281 655.5H1050M281 668.5H1050M281 680.5H1050M281 692.5H1050M281 705.5H1050M281 717.5H1050M281 729.5H1050M281 741.5H1050M282.5 619V742M292.5 619V742M302.5 619V742M312.5 619V742M322.5 619V742M332.5 619V742M342.5 619V742M352.5 619V742M362.5 619V742M372.5 619V742M382.5 619V742M392.5 619V742M402.5 619V742M412.5 619V742M422.5 619V742M432.5 619V742M442.5 619V742M452.5 619V742M462.5 619V742M472.5 619V742M482.5 619V742M492.5 619V742M502.5 619V742M512.5 619V742M522.5 619V742M532.5 619V742M542.5 619V742M552.5 619V742M562.5 619V742M572.5 619V742M582.5 619V742M592.5 619V742M602.5 619V742M612.5 619V742M622.5 619V742M632.5 619V742M642.5 619V742M652.5 619V742M662.5 619V742M672.5 619V742M682.5 619V742M692.5 619V742M702.5 619V742M712.5 619V742M722.5 619V742M732.5 619V742M742.5 619V742M752.5 619V742M762.5 619V742M772.5 619V742M782.5 619V742M792.5 619V742M802.5 619V742M812.5 619V742M822.5 619V742M832.5 619V742M842.5 619V742M852.5 619V742M862.5 619V742M872.5 619V742M882.5 619V742M892.5 619V742M902.5 619V742M912.5 619V742M922.5 619V742M932.5 619V742M942.5 619V742M952.5 619V742M962.5 619V742M972.5 619V742M982.5 619V742M992.5 619V742M1002.5 619V742M1012.5 619V742M1022.5 619V742M1032.5 619V742M1042.5 619V742" stroke="#012501" stroke-width="1" fill="none" shape-rendering="crispEdges"/><polyline points="282.0,663.0 282.0,664.0 284.0,663.9 286.0,663.7 288.0,663.6 290.0,662.4 292.0,664.3 293.0,663.2 294.0,663.4 296.0,664.8 298.0,664.1 300.0,663.5 301.0,664.7 302.0,665.7 304.0,664.7 306.0,664.7 307.7,664.7 308.0,665.1 310.0,666.8 312.0,670.5 312.0,670.5 314.0,668.1 315.7,666.0 316.0,666.0 318.0,665.7 320.0,665.4 322.0,666.1 324.0,665.9 325.2,664.7 326.0,664.7 328.0,664.7 330.0,665.8 332.0,664.8 334.0,663.9 336.0,664.9 338.0,664.9 340.0,665.0 342.0,665.0 344.0,664.0 346.0,665.1 348.0,666.1 350.0,665.1 352.0,665.2 354.0,665.2 356.0,665.2 358.0,665.3 360.0,665.3 362.0,665.4 364.0,665.4 364.6,665.4 366.0,665.0 368.0,665.4 370.0,663.9 372.0,664.3 374.0,663.7 374.8,662.5 376.0,662.5 378.0,661.5 380.0,662.5 382.0,662.5 383.5,662.5 384.0,661.5 386.0,662.6 388.0,662.7 390.0,662.9 392.0,662.0 394.0,663.1 396.0,662.2 398.0,662.3 400.0,663.4 402.0,663.5 404.0,663.6 406.0,663.7 408.0,663.8 410.0,662.9 411.3,664.0 412.0,663.1 414.0,663.3 416.0,665.5 418.0,664.6 420.0,665.8 422.0,665.0 424.0,665.2 425.8,665.4 426.0,664.4 428.0,665.4 430.0,665.4 432.0,665.4 434.0,665.4 436.0,665.4 438.0,665.4 440.0,665.4 442.0,664.4 444.0,665.4 446.0,666.4 448.0,666.4 449.2,665.4 450.0,665.1 452.0,668.9 454.0,669.6 455.0,670.5 456.0,669.4 458.0,667.2 458.6,666.6 460.0,665.4 462.0,666.0 464.0,664.7 466.0,664.4 468.0,664.0 470.0,664.7 472.0,664.3 474.0,664.0 474.0,665.0 476.0,664.0 478.0,664.0 480.0,664.0 482.0,663.0 483.4,664.0 484.0,665.1 486.0,669.8 488.0,671.5 488.5,673.4 490.0,674.1 492.0,674.1 493.6,675.9 494.0,675.2 496.0,671.8 498.0,668.3 498.0,669.3 500.0,667.4 501.7,666.6 502.0,666.5 504.0,666.1 506.0,665.6 508.0,665.1 510.0,663.6 511.9,664.2 512.0,664.2 514.0,664.1 516.0,664.0 518.0,664.9 520.0,664.8 522.0,664.7 524.0,663.6 526.0,662.5 528.0,663.4 530.0,663.3 532.0,663.2 532.3,663.2 534.0,662.1 536.0,663.0 538.0,661.9 540.0,663.8 542.0,662.7 544.0,663.6 546.0,661.5 546.9,662.5 548.0,662.8 550.0,666.0 550.5,666.6 552.0,665.5 554.0,664.1 554.2,664.0 556.0,663.4 558.0,662.7 558.8,662.5 560.0,663.5 562.0,662.5 564.0,662.5 566.0,663.5 568.0,663.5 568.2,662.5 570.0,663.3 572.0,663.1 573.3,664.7 574.0,664.7 576.0,664.7 578.0,665.7 580.0,665.7 582.0,664.7 584.0,664.7 586.0,663.7 588.0,664.7 590.0,664.7 592.0,664.7 593.8,664.7 594.0,664.7 596.0,663.6 598.0,665.5 600.0,664.4 602.0,664.3 604.0,664.2 606.0,665.1 608.0,665.0 610.0,663.0 612.0,663.9 614.0,662.8 615.6,663.7 616.0,662.7 618.0,663.6 620.0,663.6 622.0,664.5 624.0,662.4 626.0,664.4 628.0,662.3 630.0,663.3 632.0,662.2 634.0,663.1 636.0,662.1 638.0,663.0 640.0,662.9 642.0,662.9 644.0,661.8 644.8,662.8 646.0,661.8 648.0,663.9 650.0,662.0 652.0,663.1 654.0,664.2 656.0,664.2 658.0,663.3 660.0,663.4 662.0,662.5 664.0,662.5 666.0,663.6 668.0,663.7 668.0,663.7 670.0,664.2 672.0,662.7 674.0,661.2 675.0,662.0 676.0,661.8 678.0,661.3 680.0,660.8 682.0,660.3 682.0,661.3 684.0,661.3 686.0,659.3 687.8,660.3 688.0,660.5 690.0,662.2 690.0,662.2 692.0,663.3 694.0,663.5 694.4,662.5 696.0,661.5 698.0,662.4 700.0,662.3 702.0,662.3 704.0,663.2 704.6,662.2 706.0,661.3 708.0,661.0 710.0,659.7 710.4,658.4 712.0,658.4 714.0,657.4 716.0,658.4 718.0,658.4 720.0,659.4 722.0,658.4 724.0,659.4 726.0,659.4 728.0,658.4 728.0,658.4 730.0,657.3 732.0,658.2 734.0,659.1 736.0,659.0 738.0,657.9 740.0,657.8 742.0,657.7 744.0,657.6 746.0,657.5 748.0,656.4 748.3,657.4 749.5,662.2 750.0,660.9 751.2,657.8 752.0,656.8 754.0,657.8 756.0,657.8 758.0,657.8 760.0,657.8 760.0,657.8 762.0,659.1 762.2,660.3 764.0,659.9 766.0,660.5 768.0,659.1 768.8,658.9 770.0,658.4 772.0,660.1 772.4,660.3 774.0,660.8 776.0,659.2 778.0,658.5 780.0,657.9 780.4,657.8 782.0,657.8 784.0,656.8 786.0,657.8 788.0,657.8 789.2,657.8 790.0,656.8 792.0,657.7 794.0,657.7 796.0,657.6 798.0,657.6 800.0,657.5 802.0,657.5 804.0,657.4 806.0,657.3 808.0,657.3 810.0,657.2 812.0,657.2 814.0,657.1 816.0,657.1 818.0,656.0 819.0,657.0 820.0,657.0 824.6,655.6 827.0,658.2 834.3,658.2 836.3,667.3 841.5,671.2 843.4,671.2 844.7,664.0 847.3,660.2 851.2,659.5 859.0,659.5 865.0,658.2 870.8,660.2 873.0,662.0 875.3,664.0 877.3,660.8 882.5,660.2 889.0,659.5 891.6,663.4 895.5,659.5 906.6,659.5 909.2,668.6 915.0,674.5 924.2,676.5 926.8,678.4 934.6,679.7 945.0,681.7 958.0,682.3 963.2,684.3 965.8,682.3 975.0,682.3 976.2,684.5 984.0,685.6 999.7,685.6 1002.3,686.2 1015.3,686.9 1034.8,687.5 1036.8,689.5 1050.0,689.5" fill="none" stroke="#00ff00" stroke-width="1" shape-rendering="crispEdges"/><text x="281.5" y="614" fill="#3fbf3f" letter-spacing="-0.15">Мин : 27</text><text x="331.6" y="614" fill="#d01010" letter-spacing="-0.2">Макс : 70</text><text x="1050.5" y="614" fill="#fff" text-anchor="end" letter-spacing="-0.12">Температура ГП1, °С</text><text x="277" y="623" fill="#fff" text-anchor="end">100</text><text x="277" y="745" fill="#fff" text-anchor="end">0</text><rect x="651.6" y="734" width="46.9" height="14" fill="#000"/><text x="675.5" y="745" fill="#fff" text-anchor="middle">10:34:16</text><text x="1053" y="692" fill="#fff">43</text><path d="M281 762.5H1050M281 774.5H1050M281 786.5H1050M281 798.5H1050M281 811.5H1050M281 823.5H1050M281 835.5H1050M281 848.5H1050M281 860.5H1050M281 872.5H1050M281 884.5H1050M282.5 762V885M292.5 762V885M302.5 762V885M312.5 762V885M322.5 762V885M332.5 762V885M342.5 762V885M352.5 762V885M362.5 762V885M372.5 762V885M382.5 762V885M392.5 762V885M402.5 762V885M412.5 762V885M422.5 762V885M432.5 762V885M442.5 762V885M452.5 762V885M462.5 762V885M472.5 762V885M482.5 762V885M492.5 762V885M502.5 762V885M512.5 762V885M522.5 762V885M532.5 762V885M542.5 762V885M552.5 762V885M562.5 762V885M572.5 762V885M582.5 762V885M592.5 762V885M602.5 762V885M612.5 762V885M622.5 762V885M632.5 762V885M642.5 762V885M652.5 762V885M662.5 762V885M672.5 762V885M682.5 762V885M692.5 762V885M702.5 762V885M712.5 762V885M722.5 762V885M732.5 762V885M742.5 762V885M752.5 762V885M762.5 762V885M772.5 762V885M782.5 762V885M792.5 762V885M802.5 762V885M812.5 762V885M822.5 762V885M832.5 762V885M842.5 762V885M852.5 762V885M862.5 762V885M872.5 762V885M882.5 762V885M892.5 762V885M902.5 762V885M912.5 762V885M922.5 762V885M932.5 762V885M942.5 762V885M952.5 762V885M962.5 762V885M972.5 762V885M982.5 762V885M992.5 762V885M1002.5 762V885M1012.5 762V885M1022.5 762V885M1032.5 762V885M1042.5 762V885" stroke="#012501" stroke-width="1" fill="none" shape-rendering="crispEdges"/><polyline points="282.0,826.0 298.0,825.0 675.0,824.5 764.0,824.5 773.0,817.6 906.0,817.5 908.0,879.0 1050.0,879.0" fill="none" stroke="#00ff00" stroke-width="1" shape-rendering="crispEdges"/><text x="281.5" y="757" fill="#3fbf3f" letter-spacing="-0.15">Мин : 244</text><text x="337.6" y="757" fill="#d01010" letter-spacing="-0.2">Макс : 4591</text><text x="1050.5" y="757" fill="#fff" text-anchor="end" letter-spacing="-0.12">Загрузка памяти 1660, МБ</text><text x="277" y="766" fill="#fff" text-anchor="end">8192</text><text x="277" y="888" fill="#fff" text-anchor="end">0</text><rect x="651.6" y="877" width="46.9" height="14" fill="#000"/><text x="675.5" y="888" fill="#fff" text-anchor="middle">10:34:16</text><text x="1053" y="882" fill="#fff">375</text><path d="M281 905.5H1050M281 917.5H1050M281 929.5H1050M281 941.5H1050M281 954.5H1050M281 966.5H1050M281 978.5H1050M281 991.5H1050M281 1003.5H1050M281 1015.5H1050M281 1027.5H1050M282.5 905V1028M292.5 905V1028M302.5 905V1028M312.5 905V1028M322.5 905V1028M332.5 905V1028M342.5 905V1028M352.5 905V1028M362.5 905V1028M372.5 905V1028M382.5 905V1028M392.5 905V1028M402.5 905V1028M412.5 905V1028M422.5 905V1028M432.5 905V1028M442.5 905V1028M452.5 905V1028M462.5 905V1028M472.5 905V1028M482.5 905V1028M492.5 905V1028M502.5 905V1028M512.5 905V1028M522.5 905V1028M532.5 905V1028M542.5 905V1028M552.5 905V1028M562.5 905V1028M572.5 905V1028M582.5 905V1028M592.5 905V1028M602.5 905V1028M612.5 905V1028M622.5 905V1028M632.5 905V1028M642.5 905V1028M652.5 905V1028M662.5 905V1028M672.5 905V1028M682.5 905V1028M692.5 905V1028M702.5 905V1028M712.5 905V1028M722.5 905V1028M732.5 905V1028M742.5 905V1028M752.5 905V1028M762.5 905V1028M772.5 905V1028M782.5 905V1028M792.5 905V1028M802.5 905V1028M812.5 905V1028M822.5 905V1028M832.5 905V1028M842.5 905V1028M852.5 905V1028M862.5 905V1028M872.5 905V1028M882.5 905V1028M892.5 905V1028M902.5 905V1028M912.5 905V1028M922.5 905V1028M932.5 905V1028M942.5 905V1028M952.5 905V1028M962.5 905V1028M972.5 905V1028M982.5 905V1028M992.5 905V1028M1002.5 905V1028M1012.5 905V1028M1022.5 905V1028M1032.5 905V1028M1042.5 905V1028" stroke="#012501" stroke-width="1" fill="none" shape-rendering="crispEdges"/><polyline points="282.0,963.6 284.0,987.1 286.0,961.0 288.0,975.4 290.0,958.9 292.0,974.5 294.0,957.6 296.0,970.6 298.0,954.2 300.0,962.1 301.0,996.0 302.0,954.7 304.0,960.4 306.0,953.4 308.0,965.5 310.0,954.0 311.0,995.0 312.0,1000.0 314.0,951.7 316.0,960.5 318.0,954.4 320.0,962.0 322.0,953.4 324.0,966.1 326.0,953.9 328.0,967.7 330.0,953.8 332.0,968.0 334.0,953.3 336.0,966.9 338.0,950.5 340.0,959.4 342.0,951.3 344.0,964.5 346.0,951.0 348.0,965.8 350.0,951.8 352.0,969.8 354.0,952.5 356.0,956.6 358.0,952.1 360.0,958.1 362.0,951.6 364.0,962.3 366.0,951.4 368.0,966.8 370.0,952.6 372.0,965.9 374.0,949.6 376.0,964.3 378.0,952.4 380.0,965.9 382.0,951.7 384.0,976.4 386.0,952.2 388.0,954.2 390.0,953.3 392.0,965.3 394.0,952.3 396.0,969.1 398.0,952.8 400.0,963.7 402.0,954.8 404.0,965.9 406.0,954.0 408.0,957.4 410.0,955.2 412.0,960.0 414.0,954.0 416.0,961.6 418.0,955.6 420.0,966.7 422.0,956.6 424.0,964.3 426.0,954.0 428.0,957.8 430.0,955.8 432.0,970.7 434.0,955.6 436.0,960.2 438.0,985.0 440.0,972.5 442.0,955.3 444.0,966.7 446.0,956.0 448.0,972.1 450.0,958.2 452.0,990.0 454.0,955.8 456.0,969.5 458.0,956.6 460.0,961.1 462.0,956.0 464.0,979.3 466.0,956.6 468.0,962.8 470.0,957.5 472.0,982.0 474.0,954.8 476.0,959.7 478.0,957.0 480.0,962.6 482.0,954.9 484.0,958.9 486.0,953.7 488.0,995.4 490.0,999.3 492.0,1005.5 494.0,1001.9 496.0,984.8 498.0,969.6 500.0,969.9 502.0,959.3 504.0,963.0 506.0,953.9 507.0,985.0 508.0,960.5 510.0,952.1 512.0,959.7 514.0,951.9 516.0,965.4 518.0,951.0 520.0,953.8 522.0,952.3 524.0,955.9 526.0,950.5 528.0,954.9 530.0,951.2 532.0,957.1 534.0,949.0 536.0,961.2 538.0,950.9 540.0,964.4 542.0,950.8 544.0,956.1 546.0,951.2 548.0,996.0 550.0,948.7 551.0,975.0 552.0,960.4 554.0,950.5 556.0,957.7 558.0,950.6 560.0,959.4 562.0,951.2 564.0,961.1 566.0,950.3 568.0,966.6 570.0,952.1 572.0,957.0 574.0,952.3 576.0,962.9 578.0,954.8 580.0,975.0 582.0,955.5 584.0,962.5 586.0,955.5 588.0,967.2 590.0,955.4 592.0,957.1 594.0,956.1 596.0,967.5 598.0,954.9 600.0,961.1 602.0,954.3 603.0,970.0 604.0,964.0 606.0,955.3 608.0,963.8 610.0,955.1 612.0,975.9 614.0,954.3 616.0,966.6 618.0,955.5 620.0,970.5 622.0,953.7 624.0,966.0 626.0,975.0 628.0,960.9 630.0,954.7 632.0,957.0 634.0,954.7 636.0,960.2 638.0,954.2 640.0,959.9 642.0,956.6 644.0,961.9 646.0,956.4 647.0,985.0 648.0,960.4 650.0,956.1 652.0,959.1 654.0,954.9 656.0,958.6 658.0,955.4 660.0,964.9 662.0,955.3 664.0,971.3 666.0,953.7 668.0,988.0 670.0,975.0 672.0,958.9 674.0,952.6 676.0,952.9 678.0,949.1 680.0,948.7 682.0,946.8 684.0,948.6 686.0,946.9 688.0,948.9 690.0,946.4 692.0,951.5 694.0,947.8 696.0,950.0 698.0,946.6 700.0,951.9 702.0,949.1 704.0,972.0 706.0,946.2 708.0,949.0 710.0,947.6 712.0,952.1 714.0,947.0 716.0,953.4 718.0,946.9 720.0,949.4 722.0,946.7 724.0,948.2 726.0,946.7 728.0,948.2 730.0,948.8 732.0,947.6 734.0,945.9 736.0,949.1 738.0,946.9 740.0,949.6 742.0,946.8 744.0,951.3 746.0,946.2 748.0,998.5 750.0,947.1 752.0,948.9 754.0,945.6 756.0,948.3 758.0,948.7 760.0,955.1 762.0,997.0 764.0,949.6 766.0,946.4 768.0,951.3 770.0,965.0 772.0,953.0 774.0,948.2 776.0,964.0 778.0,945.0 780.0,956.8 782.0,950.1 784.0,950.1 786.0,949.1 788.0,950.4 790.0,948.4 792.0,953.3 794.0,948.5 796.0,950.4 797.0,966.0 798.0,949.7 800.0,953.9 802.0,949.9 804.0,955.9 806.0,949.2 808.0,952.7 810.0,949.2 812.0,951.8 814.0,948.1 816.0,951.4 817.0,966.0 818.0,948.7 820.0,952.0 822.0,948.9 824.0,951.0 826.0,950.0 827.0,967.0 828.0,951.3 830.0,948.7 832.0,949.5 834.0,947.8 836.0,999.0 838.0,1001.2 840.0,1002.2 842.0,1003.0 844.0,970.5 846.0,954.0 848.0,956.3 850.0,957.0 852.0,957.0 854.0,956.9 856.0,957.7 858.0,954.5 860.0,959.4 862.0,954.5 864.0,962.1 866.0,955.2 868.0,983.0 870.0,975.0 872.0,984.8 874.0,952.9 876.0,983.0 878.0,952.7 880.0,970.0 882.0,954.0 884.0,965.5 886.0,953.7 888.0,961.0 890.0,955.8 892.0,959.0 894.0,953.2 896.0,956.6 898.0,953.4 900.0,956.9 902.0,952.2 904.0,956.2 906.0,951.8 907.0,978.6 907.5,998.5 910.0,1001.0 912.0,999.0 913.0,999.0 914.0,1003.5 919.0,1003.5 920.0,1010.5 925.0,1010.5 926.0,1012.5 946.0,1012.5 947.0,1018.5 950.0,1019.5 965.0,1018.5 966.0,1009.5 973.0,1009.5 975.0,1018.0 1006.0,1018.0 1008.0,1020.5 1030.0,1020.0 1050.0,1020.5" fill="none" stroke="#00ff00" stroke-width="1" shape-rendering="crispEdges"/><text x="281.5" y="900" fill="#3fbf3f" letter-spacing="-0.15">Мин : 8</text><text x="325.6" y="900" fill="#d01010" letter-spacing="-0.2">Макс : 103</text><text x="1050.5" y="900" fill="#fff" text-anchor="end" letter-spacing="-0.12">Энергопотребление ГП1, %</text><text x="277" y="909" fill="#fff" text-anchor="end">150</text><text x="277" y="1031" fill="#fff" text-anchor="end">0</text><rect x="651.6" y="1020" width="46.9" height="14" fill="#000"/><text x="675.5" y="1031" fill="#fff" text-anchor="middle">10:34:16</text><text x="1053" y="1024" fill="#fff">8</text><path d="M1114 47.5H1883M1114 59.5H1883M1114 71.5H1883M1114 83.5H1883M1114 96.5H1883M1114 108.5H1883M1114 120.5H1883M1114 133.5H1883M1114 145.5H1883M1114 157.5H1883M1114 169.5H1883M1115.5 47V170M1125.5 47V170M1135.5 47V170M1145.5 47V170M1155.5 47V170M1165.5 47V170M1175.5 47V170M1185.5 47V170M1195.5 47V170M1205.5 47V170M1215.5 47V170M1225.5 47V170M1235.5 47V170M1245.5 47V170M1255.5 47V170M1265.5 47V170M1275.5 47V170M1285.5 47V170M1295.5 47V170M1305.5 47V170M1315.5 47V170M1325.5 47V170M1335.5 47V170M1345.5 47V170M1355.5 47V170M1365.5 47V170M1375.5 47V170M1385.5 47V170M1395.5 47V170M1405.5 47V170M1415.5 47V170M1425.5 47V170M1435.5 47V170M1445.5 47V170M1455.5 47V170M1465.5 47V170M1475.5 47V170M1485.5 47V170M1495.5 47V170M1505.5 47V170M1515.5 47V170M1525.5 47V170M1535.5 47V170M1545.5 47V170M1555.5 47V170M1565.5 47V170M1575.5 47V170M1585.5 47V170M1595.5 47V170M1605.5 47V170M1615.5 47V170M1625.5 47V170M1635.5 47V170M1645.5 47V170M1655.5 47V170M1665.5 47V170M1675.5 47V170M1685.5 47V170M1695.5 47V170M1705.5 47V170M1715.5 47V170M1725.5 47V170M1735.5 47V170M1745.5 47V170M1755.5 47V170M1765.5 47V170M1775.5 47V170M1785.5 47V170M1795.5 47V170M1805.5 47V170M1815.5 47V170M1825.5 47V170M1835.5 47V170M1845.5 47V170M1855.5 47V170M1865.5 47V170M1875.5 47V170" stroke="#012501" stroke-width="1" fill="none" shape-rendering="crispEdges"/><polyline points="1115.0,121.0 1580.0,121.0 1590.0,120.0 1740.0,120.0 1742.0,151.3 1773.0,151.3 1775.0,154.4 1883.0,154.0" fill="none" stroke="#00ff00" stroke-width="1" shape-rendering="crispEdges"/><text x="1114.5" y="42" fill="#3fbf3f" letter-spacing="-0.15">Мин : 1796</text><text x="1176.6" y="42" fill="#d01010" letter-spacing="-0.2">Макс : 7086</text><text x="1883.5" y="42" fill="#fff" text-anchor="end" letter-spacing="-0.12">Загрузка ОЗУ, МБ</text><text x="1110" y="51" fill="#fff" text-anchor="end">16384</text><text x="1110" y="173" fill="#fff" text-anchor="end">0</text><rect x="1484.6" y="162" width="46.9" height="14" fill="#000"/><text x="1508.5" y="173" fill="#fff" text-anchor="middle">10:34:16</text><text x="1886" y="156" fill="#fff">2146</text><path d="M1114 190.5H1883M1114 202.5H1883M1114 214.5H1883M1114 226.5H1883M1114 239.5H1883M1114 251.5H1883M1114 263.5H1883M1114 276.5H1883M1114 288.5H1883M1114 300.5H1883M1114 312.5H1883M1115.5 190V313M1125.5 190V313M1135.5 190V313M1145.5 190V313M1155.5 190V313M1165.5 190V313M1175.5 190V313M1185.5 190V313M1195.5 190V313M1205.5 190V313M1215.5 190V313M1225.5 190V313M1235.5 190V313M1245.5 190V313M1255.5 190V313M1265.5 190V313M1275.5 190V313M1285.5 190V313M1295.5 190V313M1305.5 190V313M1315.5 190V313M1325.5 190V313M1335.5 190V313M1345.5 190V313M1355.5 190V313M1365.5 190V313M1375.5 190V313M1385.5 190V313M1395.5 190V313M1405.5 190V313M1415.5 190V313M1425.5 190V313M1435.5 190V313M1445.5 190V313M1455.5 190V313M1465.5 190V313M1475.5 190V313M1485.5 190V313M1495.5 190V313M1505.5 190V313M1515.5 190V313M1525.5 190V313M1535.5 190V313M1545.5 190V313M1555.5 190V313M1565.5 190V313M1575.5 190V313M1585.5 190V313M1595.5 190V313M1605.5 190V313M1615.5 190V313M1625.5 190V313M1635.5 190V313M1645.5 190V313M1655.5 190V313M1665.5 190V313M1675.5 190V313M1685.5 190V313M1695.5 190V313M1705.5 190V313M1715.5 190V313M1725.5 190V313M1735.5 190V313M1745.5 190V313M1755.5 190V313M1765.5 190V313M1775.5 190V313M1785.5 190V313M1795.5 190V313M1805.5 190V313M1815.5 190V313M1825.5 190V313M1835.5 190V313M1845.5 190V313M1855.5 190V313M1865.5 190V313M1875.5 190V313" stroke="#012501" stroke-width="1" fill="none" shape-rendering="crispEdges"/><polyline points="1115.0,190.0 1588.0,190.0 1590.0,196.0 1592.0,190.0 1617.0,190.0 1619.0,196.0 1621.0,190.0 1740.0,190.0 1741.0,205.0 1742.0,240.0 1744.0,312.0 1746.0,311.1 1748.0,307.4 1750.0,312.0 1752.0,301.7 1753.0,263.0 1754.0,270.0 1756.0,305.1 1758.0,310.9 1760.0,308.7 1762.0,312.0 1764.0,307.7 1766.0,290.0 1768.0,307.2 1769.0,288.0 1770.0,312.0 1772.0,308.8 1774.0,312.0 1776.0,293.9 1778.0,312.0 1780.0,307.4 1782.0,312.0 1784.0,256.0 1786.0,311.6 1788.0,305.3 1790.0,312.0 1792.0,305.9 1794.0,311.4 1796.0,309.3 1798.0,312.0 1799.0,201.0 1800.0,230.0 1802.0,312.0 1804.0,306.3 1805.0,241.0 1806.0,260.0 1808.0,299.7 1810.0,312.0 1812.0,302.8 1814.0,312.0 1815.0,290.0 1816.0,303.6 1818.0,312.0 1820.0,310.4 1822.0,311.5 1824.0,304.8 1826.0,312.0 1828.0,306.2 1830.0,312.0 1831.0,290.0 1832.0,306.2 1834.0,311.6 1836.0,307.3 1838.0,312.0 1840.0,307.9 1842.0,310.9 1844.0,304.8 1846.0,312.0 1848.0,290.0 1849.0,258.0 1850.0,219.0 1851.0,232.0 1852.0,240.0 1853.0,228.0 1854.0,222.0 1855.0,214.0 1856.0,236.0 1857.0,250.0 1858.0,278.0 1859.0,300.0 1860.0,307.1 1862.0,311.9 1864.0,305.7 1866.0,311.7 1867.0,254.0 1868.0,309.6 1869.0,270.0 1870.0,311.4 1872.0,274.6 1874.0,311.4 1876.0,295.6 1878.0,312.0 1879.0,255.0 1880.0,309.5 1881.0,290.0 1883.0,311.0" fill="none" stroke="#00ff00" stroke-width="1" shape-rendering="crispEdges"/><text x="1114.5" y="185" fill="#3fbf3f" letter-spacing="-0.15">Мин : 0</text><text x="1158.6" y="185" fill="#d01010" letter-spacing="-0.2">Макс : 100</text><text x="1883.5" y="185" fill="#fff" text-anchor="end" letter-spacing="-0.12">Загрузка ЦП2, %</text><text x="1110" y="194" fill="#fff" text-anchor="end">100</text><text x="1110" y="316" fill="#fff" text-anchor="end">0</text><rect x="1484.6" y="305" width="46.9" height="14" fill="#000"/><text x="1508.5" y="316" fill="#fff" text-anchor="middle">10:34:16</text><text x="1886" y="315" fill="#fff">0</text><path d="M1114 333.5H1883M1114 345.5H1883M1114 357.5H1883M1114 369.5H1883M1114 382.5H1883M1114 394.5H1883M1114 406.5H1883M1114 419.5H1883M1114 431.5H1883M1114 443.5H1883M1114 455.5H1883M1115.5 333V456M1125.5 333V456M1135.5 333V456M1145.5 333V456M1155.5 333V456M1165.5 333V456M1175.5 333V456M1185.5 333V456M1195.5 333V456M1205.5 333V456M1215.5 333V456M1225.5 333V456M1235.5 333V456M1245.5 333V456M1255.5 333V456M1265.5 333V456M1275.5 333V456M1285.5 333V456M1295.5 333V456M1305.5 333V456M1315.5 333V456M1325.5 333V456M1335.5 333V456M1345.5 333V456M1355.5 333V456M1365.5 333V456M1375.5 333V456M1385.5 333V456M1395.5 333V456M1405.5 333V456M1415.5 333V456M1425.5 333V456M1435.5 333V456M1445.5 333V456M1455.5 333V456M1465.5 333V456M1475.5 333V456M1485.5 333V456M1495.5 333V456M1505.5 333V456M1515.5 333V456M1525.5 333V456M1535.5 333V456M1545.5 333V456M1555.5 333V456M1565.5 333V456M1575.5 333V456M1585.5 333V456M1595.5 333V456M1605.5 333V456M1615.5 333V456M1625.5 333V456M1635.5 333V456M1645.5 333V456M1655.5 333V456M1665.5 333V456M1675.5 333V456M1685.5 333V456M1695.5 333V456M1705.5 333V456M1715.5 333V456M1725.5 333V456M1735.5 333V456M1745.5 333V456M1755.5 333V456M1765.5 333V456M1775.5 333V456M1785.5 333V456M1795.5 333V456M1805.5 333V456M1815.5 333V456M1825.5 333V456M1835.5 333V456M1845.5 333V456M1855.5 333V456M1865.5 333V456M1875.5 333V456" stroke="#012501" stroke-width="1" fill="none" shape-rendering="crispEdges"/><polyline points="1115.0,401.1 1117.0,333.0 1119.0,401.6 1121.0,382.0 1123.0,398.3 1125.0,394.7 1127.0,403.8 1129.0,393.3 1131.0,405.4 1133.0,386.8 1134.0,380.0 1135.0,333.0 1136.0,380.0 1137.0,400.2 1139.0,402.4 1141.0,395.7 1143.0,405.3 1145.0,336.0 1146.0,333.0 1147.0,370.0 1149.0,384.1 1151.0,400.5 1153.0,392.6 1155.0,402.6 1157.0,383.7 1159.0,405.3 1161.0,396.8 1163.0,408.5 1165.0,399.8 1167.0,405.3 1169.0,342.1 1171.0,401.4 1173.0,384.8 1175.0,405.1 1177.0,385.0 1179.0,402.0 1181.0,383.7 1183.0,402.4 1185.0,394.3 1187.0,406.1 1189.0,388.0 1191.0,399.6 1193.0,394.1 1195.0,405.4 1197.0,387.2 1199.0,406.9 1201.0,396.7 1203.0,401.4 1205.0,342.1 1207.0,403.2 1209.0,335.8 1211.0,403.8 1213.0,388.6 1215.0,403.9 1217.0,358.9 1219.0,403.1 1221.0,389.9 1223.0,402.8 1225.0,359.4 1227.0,405.3 1229.0,395.8 1231.0,400.0 1233.0,378.8 1235.0,405.7 1237.0,387.2 1239.0,402.8 1241.0,384.1 1243.0,401.6 1245.0,390.9 1247.0,404.3 1249.0,386.7 1251.0,406.4 1253.0,378.9 1255.0,404.8 1257.0,382.1 1259.0,407.1 1261.0,391.8 1263.0,401.8 1265.0,395.9 1267.0,404.5 1269.0,399.0 1271.0,407.3 1273.0,385.9 1275.0,403.5 1277.0,384.9 1279.0,405.1 1281.0,380.4 1283.0,402.8 1285.0,387.1 1286.0,333.0 1287.0,340.0 1289.0,383.5 1291.0,391.2 1293.0,383.0 1295.0,403.1 1297.0,398.1 1299.0,405.1 1301.0,391.6 1303.0,408.1 1305.0,361.4 1307.0,408.7 1309.0,392.3 1311.0,407.0 1313.0,404.4 1315.0,409.5 1317.0,392.7 1319.0,400.0 1320.0,455.0 1327.0,455.0 1328.0,333.0 1329.0,390.0 1331.0,406.3 1333.0,350.8 1335.0,405.8 1337.0,390.3 1339.0,403.3 1340.0,357.0 1341.0,398.3 1343.0,408.9 1345.0,388.7 1347.0,410.4 1349.0,387.5 1351.0,409.0 1353.0,402.3 1355.0,408.9 1357.0,333.0 1359.0,407.2 1361.0,369.0 1363.0,408.0 1365.0,400.5 1367.0,409.3 1369.0,389.3 1371.0,412.1 1373.0,403.7 1375.0,409.9 1377.0,396.3 1379.0,413.2 1381.0,403.2 1383.0,411.6 1384.0,337.0 1385.0,350.0 1387.0,410.2 1389.0,390.8 1391.0,415.0 1393.0,398.3 1395.0,411.6 1397.0,389.6 1399.0,411.2 1401.0,389.0 1403.0,415.7 1405.0,392.2 1407.0,410.7 1409.0,401.9 1411.0,412.4 1413.0,382.8 1415.0,417.4 1417.0,405.4 1419.0,414.9 1421.0,411.0 1423.0,411.4 1425.0,381.5 1427.0,417.2 1429.0,399.8 1431.0,420.9 1433.0,410.4 1435.0,419.7 1437.0,359.8 1439.0,423.6 1441.0,410.7 1443.0,422.7 1445.0,407.5 1447.0,419.5 1449.0,411.3 1451.0,420.1 1453.0,383.6 1455.0,418.4 1457.0,413.0 1459.0,418.7 1461.0,408.9 1463.0,419.8 1465.0,412.1 1467.0,418.9 1469.0,407.3 1471.0,418.0 1473.0,369.4 1475.0,420.9 1477.0,412.2 1479.0,418.2 1481.0,414.1 1483.0,420.2 1485.0,363.5 1487.0,412.3 1489.0,403.2 1491.0,407.7 1493.0,356.4 1495.0,405.4 1497.0,388.6 1499.0,402.6 1501.0,399.6 1502.0,336.0 1503.0,370.0 1505.0,382.2 1507.0,394.9 1509.0,389.9 1511.0,400.5 1513.0,383.7 1515.0,406.7 1517.0,383.6 1519.0,403.9 1521.0,401.8 1523.0,407.6 1525.0,351.4 1527.0,405.6 1529.0,388.4 1531.0,408.3 1533.0,381.5 1535.0,413.1 1537.0,383.4 1539.0,417.2 1541.0,373.1 1543.0,413.0 1545.0,386.9 1547.0,404.3 1549.0,379.5 1551.0,407.2 1553.0,400.9 1555.0,403.6 1557.0,400.0 1559.0,404.1 1561.0,398.2 1563.0,402.3 1565.0,376.4 1567.0,403.5 1569.0,399.6 1571.0,402.5 1573.0,393.3 1575.0,403.0 1577.0,391.5 1579.0,404.9 1581.0,387.5 1583.0,333.0 1585.0,389.1 1587.0,403.8 1589.0,388.7 1591.0,402.5 1593.0,384.5 1595.0,398.5 1597.0,390.6 1599.0,333.0 1601.0,386.6 1603.0,399.6 1605.0,386.1 1607.0,400.0 1609.0,387.2 1611.0,401.4 1613.0,396.9 1615.0,403.3 1617.0,390.5 1619.0,403.7 1621.0,387.4 1623.0,407.2 1625.0,398.2 1627.0,404.6 1629.0,392.3 1631.0,404.8 1633.0,400.6 1635.0,407.2 1637.0,405.0 1639.0,408.4 1641.0,397.3 1643.0,410.1 1645.0,381.5 1647.0,409.1 1649.0,403.7 1651.0,411.2 1653.0,393.6 1655.0,407.1 1657.0,399.5 1659.0,410.4 1661.0,398.5 1663.0,408.6 1665.0,394.7 1667.0,400.0 1668.0,455.0 1675.0,455.0 1676.0,333.0 1677.0,390.0 1679.0,409.7 1681.0,392.3 1683.0,410.0 1685.0,394.2 1687.0,403.3 1689.0,401.6 1691.0,406.5 1693.0,390.2 1695.0,402.9 1697.0,366.5 1699.0,400.7 1701.0,375.8 1703.0,400.3 1705.0,367.2 1707.0,398.5 1708.0,333.0 1709.0,386.1 1711.0,405.7 1713.0,372.1 1715.0,405.2 1717.0,400.1 1719.0,409.4 1721.0,396.9 1723.0,411.3 1724.0,333.0 1725.0,383.3 1727.0,411.9 1729.0,394.9 1731.0,415.1 1733.0,402.3 1735.0,415.4 1737.0,393.5 1739.0,405.0 1740.0,455.0" fill="none" stroke="#00ff00" stroke-width="1" shape-rendering="crispEdges"/><text x="1114.5" y="328" fill="#3fbf3f" letter-spacing="-0.15">Мин : 0.0</text><text x="1167.5" y="328" fill="#d01010" letter-spacing="-0.2">Макс : 5661.3</text><text x="1883.5" y="328" fill="#fff" text-anchor="end" letter-spacing="-0.12">Время кадра, мс</text><text x="1110" y="337" fill="#fff" text-anchor="end">50</text><text x="1110" y="459" fill="#fff" text-anchor="end">0</text><rect x="1484.6" y="448" width="46.9" height="14" fill="#000"/><text x="1508.5" y="459" fill="#fff" text-anchor="middle">10:34:16</text><path d="M1114 476.5H1883M1114 488.5H1883M1114 500.5H1883M1114 512.5H1883M1114 525.5H1883M1114 537.5H1883M1114 549.5H1883M1114 562.5H1883M1114 574.5H1883M1114 586.5H1883M1114 598.5H1883M1115.5 476V599M1125.5 476V599M1135.5 476V599M1145.5 476V599M1155.5 476V599M1165.5 476V599M1175.5 476V599M1185.5 476V599M1195.5 476V599M1205.5 476V599M1215.5 476V599M1225.5 476V599M1235.5 476V599M1245.5 476V599M1255.5 476V599M1265.5 476V599M1275.5 476V599M1285.5 476V599M1295.5 476V599M1305.5 476V599M1315.5 476V599M1325.5 476V599M1335.5 476V599M1345.5 476V599M1355.5 476V599M1365.5 476V599M1375.5 476V599M1385.5 476V599M1395.5 476V599M1405.5 476V599M1415.5 476V599M1425.5 476V599M1435.5 476V599M1445.5 476V599M1455.5 476V599M1465.5 476V599M1475.5 476V599M1485.5 476V599M1495.5 476V599M1505.5 476V599M1515.5 476V599M1525.5 476V599M1535.5 476V599M1545.5 476V599M1555.5 476V599M1565.5 476V599M1575.5 476V599M1585.5 476V599M1595.5 476V599M1605.5 476V599M1615.5 476V599M1625.5 476V599M1635.5 476V599M1645.5 476V599M1655.5 476V599M1665.5 476V599M1675.5 476V599M1685.5 476V599M1695.5 476V599M1705.5 476V599M1715.5 476V599M1725.5 476V599M1735.5 476V599M1745.5 476V599M1755.5 476V599M1765.5 476V599M1775.5 476V599M1785.5 476V599M1795.5 476V599M1805.5 476V599M1815.5 476V599M1825.5 476V599M1835.5 476V599M1845.5 476V599M1855.5 476V599M1865.5 476V599M1875.5 476V599" stroke="#012501" stroke-width="1" fill="none" shape-rendering="crispEdges"/><polyline points="1115.0,560.0 1180.0,560.5 1228.0,562.0" fill="none" stroke="#00ff00" stroke-width="1" shape-rendering="crispEdges"/><polyline points="1328.0,560.0 1331.0,570.3 1334.0,565.6 1337.0,564.3 1340.0,563.1 1343.0,562.0 1346.0,562.0 1349.0,561.9 1352.0,561.9 1355.0,561.9 1358.0,561.9 1361.0,561.8 1364.0,561.8 1367.0,561.8 1370.0,561.8 1373.0,561.8 1376.0,561.7 1379.0,561.7 1382.0,561.7 1385.0,561.7 1388.0,561.6 1391.0,561.6 1394.0,561.6 1397.0,561.6 1400.0,561.5 1403.0,561.5 1406.0,561.3 1409.0,561.1 1412.0,560.9 1415.0,560.6 1418.0,560.4 1421.0,560.2 1424.0,559.9 1427.0,559.7 1430.0,559.5 1433.0,559.2 1436.0,559.0 1439.0,558.8 1442.0,558.5 1445.0,558.3 1448.0,558.1 1451.0,557.8 1454.0,557.6 1457.0,557.4 1460.0,557.1 1463.0,556.9 1466.0,556.7 1469.0,556.4 1472.0,556.2 1475.0,556.0 1478.0,555.7 1481.0,555.5 1484.0,555.2 1487.0,555.0 1490.0,554.8 1493.0,554.5 1496.0,554.3 1499.0,554.1 1502.0,554.0 1505.0,554.1 1508.0,554.1 1511.0,554.2 1514.0,554.2 1517.0,554.3 1520.0,554.3 1523.0,554.4 1526.0,554.4 1529.0,554.5 1532.0,554.5 1535.0,554.6 1538.0,554.6 1541.0,554.7 1544.0,554.7 1547.0,554.8 1550.0,554.8 1553.0,554.9 1556.0,554.9 1559.0,555.0 1562.0,556.0 1565.0,556.0 1568.0,556.0 1571.0,556.0 1574.0,556.0 1577.0,556.0 1580.0,556.0 1583.0,556.0 1586.0,556.0 1589.0,556.0 1592.0,556.0 1595.0,556.0 1598.0,556.0 1601.0,556.0 1604.0,556.0 1607.0,556.0 1610.0,556.0 1613.0,556.0 1616.0,556.0 1619.0,556.0 1622.0,556.0 1625.0,556.0 1628.0,556.0 1631.0,556.0 1634.0,556.0 1637.0,556.0 1640.0,556.0 1643.0,556.0 1646.0,556.0 1649.0,556.0 1652.0,556.0 1655.0,556.0 1658.0,556.0 1661.0,556.0 1664.0,556.0 1667.0,556.0 1670.0,556.0 1673.0,556.0" fill="none" stroke="#00ff00" stroke-width="1" shape-rendering="crispEdges"/><text x="1114.5" y="471" fill="#3fbf3f" letter-spacing="-0.15">Мин : 40</text><text x="1164.6" y="471" fill="#d01010" letter-spacing="-0.2">Макс : 85</text><text x="1883.5" y="471" fill="#fff" text-anchor="end" letter-spacing="-0.12">Частота кадров Сред, кадр/с</text><text x="1110" y="480" fill="#fff" text-anchor="end">200</text><text x="1110" y="602" fill="#fff" text-anchor="end">0</text><rect x="1484.6" y="591" width="46.9" height="14" fill="#000"/><text x="1508.5" y="602" fill="#fff" text-anchor="middle">10:34:16</text><path d="M1114 619.5H1883M1114 631.5H1883M1114 643.5H1883M1114 655.5H1883M1114 668.5H1883M1114 680.5H1883M1114 692.5H1883M1114 705.5H1883M1114 717.5H1883M1114 729.5H1883M1114 741.5H1883M1115.5 619V742M1125.5 619V742M1135.5 619V742M1145.5 619V742M1155.5 619V742M1165.5 619V742M1175.5 619V742M1185.5 619V742M1195.5 619V742M1205.5 619V742M1215.5 619V742M1225.5 619V742M1235.5 619V742M1245.5 619V742M1255.5 619V742M1265.5 619V742M1275.5 619V742M1285.5 619V742M1295.5 619V742M1305.5 619V742M1315.5 619V742M1325.5 619V742M1335.5 619V742M1345.5 619V742M1355.5 619V742M1365.5 619V742M1375.5 619V742M1385.5 619V742M1395.5 619V742M1405.5 619V742M1415.5 619V742M1425.5 619V742M1435.5 619V742M1445.5 619V742M1455.5 619V742M1465.5 619V742M1475.5 619V742M1485.5 619V742M1495.5 619V742M1505.5 619V742M1515.5 619V742M1525.5 619V742M1535.5 619V742M1545.5 619V742M1555.5 619V742M1565.5 619V742M1575.5 619V742M1585.5 619V742M1595.5 619V742M1605.5 619V742M1615.5 619V742M1625.5 619V742M1635.5 619V742M1645.5 619V742M1655.5 619V742M1665.5 619V742M1675.5 619V742M1685.5 619V742M1695.5 619V742M1705.5 619V742M1715.5 619V742M1725.5 619V742M1735.5 619V742M1745.5 619V742M1755.5 619V742M1765.5 619V742M1775.5 619V742M1785.5 619V742M1795.5 619V742M1805.5 619V742M1815.5 619V742M1825.5 619V742M1835.5 619V742M1845.5 619V742M1855.5 619V742M1865.5 619V742M1875.5 619V742" stroke="#012501" stroke-width="1" fill="none" shape-rendering="crispEdges"/><polyline points="1114.2,662.5 1116.6,658.3 1122.0,657.0 1126.8,652.3 1129.9,652.3 1131.7,655.3 1134.7,652.3 1136.5,657.0 1141.9,659.5 1143.7,676.4 1146.1,691.4 1148.5,691.4 1149.7,680.6 1151.5,668.0 1152.7,655.3 1159.3,653.5 1165.4,653.5 1167.8,655.3 1175.0,653.5 1179.8,648.0 1182.2,651.7 1187.0,654.7 1190.0,652.3 1200.3,652.3 1203.3,643.9 1208.0,642.0 1209.9,630.6 1212.3,634.3 1218.3,634.3 1220.7,637.3 1227.3,633.0 1232.7,634.3 1234.5,643.3 1242.4,641.5 1248.4,647.5 1250.2,653.5 1253.8,657.0 1259.2,653.5 1264.0,652.3 1270.0,655.3 1273.7,660.7 1276.7,654.1 1280.9,648.0 1285.1,653.5 1286.9,678.8 1289.9,682.4 1292.9,671.6 1294.1,660.1 1296.5,649.3 1301.3,652.3 1304.3,648.7 1307.3,653.5 1310.4,639.7 1314.6,641.5 1318.2,639.7 1320.0,658.3 1322.4,658.3 1323.0,699.8 1323.6,741.4 1329.0,741.4 1329.6,717.9 1330.8,695.6 1332.6,670.4 1333.2,644.5 1335.6,642.7 1339.3,642.0 1340.5,637.3 1345.3,636.7 1346.5,634.3 1350.7,632.4 1355.5,632.4 1356.7,642.0 1358.5,642.0 1359.7,632.4 1368.1,632.4 1369.3,626.4 1373.0,627.0 1377.2,626.4 1381.4,628.8 1382.6,640.9 1385.6,641.5 1386.8,658.3 1388.6,658.3 1389.8,639.7 1392.2,628.8 1397.6,623.4 1401.8,627.6 1405.4,630.6 1407.8,639.7 1409.7,648.7 1411.5,648.7 1413.3,640.9 1419.9,641.5 1425.9,641.5 1429.5,644.5 1437.9,642.7 1440.3,646.3 1442.7,646.3 1443.9,638.5 1448.8,636.7 1450.0,631.2 1454.8,630.0 1459.6,637.3 1465.6,637.3 1469.8,632.4 1474.6,628.2 1477.0,631.2 1481.3,628.2 1483.7,636.0 1486.7,634.3 1493.9,639.7 1496.9,637.3 1500.5,636.7 1508.0,634.0 1515.5,630.6 1518.0,622.8 1528.8,622.8 1531.2,632.4 1533.6,625.8 1539.6,625.8 1541.4,632.4 1543.2,624.0 1546.2,624.0 1548.0,626.4 1551.1,622.5 1556.5,622.5 1558.9,623.4 1564.9,621.3 1568.5,622.5 1571.5,621.3 1576.3,621.6 1577.5,623.4 1582.3,623.7 1583.6,630.0 1586.0,630.0 1587.8,622.2 1593.2,621.3 1596.2,625.8 1597.4,639.7 1598.0,654.1 1599.6,654.1 1600.4,639.1 1603.4,638.5 1605.2,633.7 1606.4,633.7 1608.2,638.5 1611.8,633.7 1613.6,633.0 1614.8,622.5 1626.3,622.5 1630.5,627.0 1636.5,627.0 1641.9,623.7 1644.9,622.5 1650.3,622.5 1651.5,628.2 1656.4,628.2 1658.2,623.7 1660.0,624.6 1661.8,628.8 1663.0,628.8 1664.8,646.3 1666.6,646.3 1667.8,633.7 1670.2,633.7 1670.8,678.8 1672.0,723.9 1673.2,724.5 1674.4,741.4 1676.2,741.4 1676.8,717.9 1678.0,695.6 1680.4,695.0 1681.0,668.0 1681.6,641.5 1683.4,640.9 1684.6,628.8 1690.0,628.8 1691.9,631.2 1694.3,623.7 1697.3,623.7 1699.1,631.8 1703.3,631.8 1704.5,639.1 1707.5,639.7 1709.3,648.1 1713.5,645.7 1715.3,638.5 1717.1,639.1 1718.3,646.9 1720.1,646.9 1721.9,638.5 1723.7,639.1 1724.9,665.5 1726.8,665.5 1727.3,646.9 1728.0,628.8 1729.8,628.2 1731.0,622.5 1733.4,622.5 1735.2,623.4 1743.6,622.5 1744.6,680.6 1744.6,738.3 1747.5,740.0 1750.8,741.5 1753.3,741.5 1757.0,738.3 1763.3,738.3 1765.0,739.6 1770.0,739.6 1774.2,737.3 1779.2,737.3 1780.8,738.3 1785.0,738.3 1786.7,735.4 1792.0,735.4 1793.8,737.5 1798.8,737.5 1800.4,733.3 1802.0,733.3 1803.8,741.3 1805.8,741.3 1810.0,739.6 1813.3,733.3 1815.0,733.3 1816.7,737.9 1818.8,737.9 1820.4,728.3 1822.5,728.3 1823.8,739.6 1825.8,739.6 1827.5,730.4 1832.0,730.4 1833.8,737.5 1842.5,737.5 1844.6,738.3 1846.7,737.5 1852.0,737.5 1853.8,733.3 1855.8,733.3 1857.5,739.2 1860.0,740.4 1862.0,740.4 1863.8,732.5 1866.3,732.5 1867.0,720.0 1867.5,707.5 1869.2,707.5 1870.4,712.0 1870.8,716.7 1872.5,716.7 1873.3,728.3 1873.8,738.3 1876.3,738.3 1877.5,735.0 1879.2,735.0 1881.7,733.3 1883.0,733.0" fill="none" stroke="#00ff00" stroke-width="1" shape-rendering="crispEdges"/><text x="1114.5" y="614" fill="#3fbf3f" letter-spacing="-0.15">Мин : 0</text><text x="1158.6" y="614" fill="#d01010" letter-spacing="-0.2">Макс : 99</text><text x="1883.5" y="614" fill="#fff" text-anchor="end" letter-spacing="-0.12">Загрузка ГП1, %</text><text x="1110" y="623" fill="#fff" text-anchor="end">100</text><text x="1110" y="745" fill="#fff" text-anchor="end">0</text><rect x="1484.6" y="734" width="46.9" height="14" fill="#000"/><text x="1508.5" y="745" fill="#fff" text-anchor="middle">10:34:16</text><text x="1886" y="736" fill="#fff">7</text><path d="M1114 762.5H1883M1114 774.5H1883M1114 786.5H1883M1114 798.5H1883M1114 811.5H1883M1114 823.5H1883M1114 835.5H1883M1114 848.5H1883M1114 860.5H1883M1114 872.5H1883M1114 884.5H1883M1115.5 762V885M1125.5 762V885M1135.5 762V885M1145.5 762V885M1155.5 762V885M1165.5 762V885M1175.5 762V885M1185.5 762V885M1195.5 762V885M1205.5 762V885M1215.5 762V885M1225.5 762V885M1235.5 762V885M1245.5 762V885M1255.5 762V885M1265.5 762V885M1275.5 762V885M1285.5 762V885M1295.5 762V885M1305.5 762V885M1315.5 762V885M1325.5 762V885M1335.5 762V885M1345.5 762V885M1355.5 762V885M1365.5 762V885M1375.5 762V885M1385.5 762V885M1395.5 762V885M1405.5 762V885M1415.5 762V885M1425.5 762V885M1435.5 762V885M1445.5 762V885M1455.5 762V885M1465.5 762V885M1475.5 762V885M1485.5 762V885M1495.5 762V885M1505.5 762V885M1515.5 762V885M1525.5 762V885M1535.5 762V885M1545.5 762V885M1555.5 762V885M1565.5 762V885M1575.5 762V885M1585.5 762V885M1595.5 762V885M1605.5 762V885M1615.5 762V885M1625.5 762V885M1635.5 762V885M1645.5 762V885M1655.5 762V885M1665.5 762V885M1675.5 762V885M1685.5 762V885M1695.5 762V885M1705.5 762V885M1715.5 762V885M1725.5 762V885M1735.5 762V885M1745.5 762V885M1755.5 762V885M1765.5 762V885M1775.5 762V885M1785.5 762V885M1795.5 762V885M1805.5 762V885M1815.5 762V885M1825.5 762V885M1835.5 762V885M1845.5 762V885M1855.5 762V885M1865.5 762V885M1875.5 762V885" stroke="#012501" stroke-width="1" fill="none" shape-rendering="crispEdges"/><polyline points="1115.0,790.0 1322.0,790.0 1324.0,800.0 1326.0,865.0 1328.0,865.0 1330.0,800.0 1332.0,790.0 1671.0,790.0 1673.0,800.0 1674.0,865.0 1676.0,865.0 1677.0,795.0 1678.0,790.0 1745.0,790.0 1747.0,858.7 1750.0,865.0 1756.0,870.0 1797.0,870.0 1798.0,810.0 1806.0,810.0 1807.0,845.0 1808.0,865.0 1815.0,870.0 1883.0,870.0" fill="none" stroke="#00ff00" stroke-width="1" shape-rendering="crispEdges"/><text x="1114.5" y="757" fill="#3fbf3f" letter-spacing="-0.15">Мин : 300</text><text x="1170.6" y="757" fill="#d01010" letter-spacing="-0.2">Макс : 1980</text><text x="1883.5" y="757" fill="#fff" text-anchor="end" letter-spacing="-0.12">Частота ядра ГП1, МГц</text><text x="1110" y="766" fill="#fff" text-anchor="end">2500</text><text x="1110" y="888" fill="#fff" text-anchor="end">0</text><rect x="1484.6" y="877" width="46.9" height="14" fill="#000"/><text x="1508.5" y="888" fill="#fff" text-anchor="middle">10:34:16</text><text x="1886" y="873" fill="#fff">300</text><path d="M1114 905.5H1883M1114 917.5H1883M1114 929.5H1883M1114 941.5H1883M1114 954.5H1883M1114 966.5H1883M1114 978.5H1883M1114 991.5H1883M1114 1003.5H1883M1114 1015.5H1883M1114 1027.5H1883M1115.5 905V1028M1125.5 905V1028M1135.5 905V1028M1145.5 905V1028M1155.5 905V1028M1165.5 905V1028M1175.5 905V1028M1185.5 905V1028M1195.5 905V1028M1205.5 905V1028M1215.5 905V1028M1225.5 905V1028M1235.5 905V1028M1245.5 905V1028M1255.5 905V1028M1265.5 905V1028M1275.5 905V1028M1285.5 905V1028M1295.5 905V1028M1305.5 905V1028M1315.5 905V1028M1325.5 905V1028M1335.5 905V1028M1345.5 905V1028M1355.5 905V1028M1365.5 905V1028M1375.5 905V1028M1385.5 905V1028M1395.5 905V1028M1405.5 905V1028M1415.5 905V1028M1425.5 905V1028M1435.5 905V1028M1445.5 905V1028M1455.5 905V1028M1465.5 905V1028M1475.5 905V1028M1485.5 905V1028M1495.5 905V1028M1505.5 905V1028M1515.5 905V1028M1525.5 905V1028M1535.5 905V1028M1545.5 905V1028M1555.5 905V1028M1565.5 905V1028M1575.5 905V1028M1585.5 905V1028M1595.5 905V1028M1605.5 905V1028M1615.5 905V1028M1625.5 905V1028M1635.5 905V1028M1645.5 905V1028M1655.5 905V1028M1665.5 905V1028M1675.5 905V1028M1685.5 905V1028M1695.5 905V1028M1705.5 905V1028M1715.5 905V1028M1725.5 905V1028M1735.5 905V1028M1745.5 905V1028M1755.5 905V1028M1765.5 905V1028M1775.5 905V1028M1785.5 905V1028M1795.5 905V1028M1805.5 905V1028M1815.5 905V1028M1825.5 905V1028M1835.5 905V1028M1845.5 905V1028M1855.5 905V1028M1865.5 905V1028M1875.5 905V1028" stroke="#012501" stroke-width="1" fill="none" shape-rendering="crispEdges"/><polyline points="1115.0,976.0 1777.0,976.0 1778.0,976.0 1779.5,985.0 1781.0,998.5 1782.0,1007.0 1784.0,1007.0 1787.0,1002.0 1789.0,1004.0 1883.0,1004.0" fill="none" stroke="#00ff00" stroke-width="1" shape-rendering="crispEdges"/><text x="1114.5" y="900" fill="#3fbf3f" letter-spacing="-0.15">Мин : 1189</text><text x="1175.8" y="900" fill="#d01010" letter-spacing="-0.2">Макс : 4294</text><text x="1883.5" y="900" fill="#fff" text-anchor="end" letter-spacing="-0.12">Тахометр кулера ГП1, об/мин</text><text x="1110" y="909" fill="#fff" text-anchor="end">10000</text><text x="1110" y="1031" fill="#fff" text-anchor="end">0</text><rect x="1484.6" y="1020" width="46.9" height="14" fill="#000"/><text x="1508.5" y="1031" fill="#fff" text-anchor="middle">10:34:16</text><text x="1886" y="1007" fill="#fff">1930</text><path d="M675.5 31V1032M1508.5 31V1032" stroke="#f0f000" stroke-width="1" stroke-dasharray="3 3" shape-rendering="crispEdges"/><rect x="667.9" y="115" width="15.2" height="12" fill="#000"/><text x="675.5" y="125" fill="#fff" text-anchor="middle">39</text><rect x="664.8" y="184" width="21.4" height="12" fill="#000"/><text x="675.5" y="194" fill="#fff" text-anchor="middle">100</text><rect x="667.9" y="407" width="15.2" height="12" fill="#000"/><text x="675.5" y="417" fill="#fff" text-anchor="middle">67</text><rect x="670.9" y="591" width="9.1" height="12" fill="#000"/><text x="675.5" y="601" fill="#fff" text-anchor="middle">0</text><rect x="667.9" y="656" width="15.2" height="12" fill="#000"/><text x="675.5" y="666" fill="#fff" text-anchor="middle">64</text><rect x="661.8" y="817" width="27.5" height="12" fill="#000"/><text x="675.5" y="827" fill="#fff" text-anchor="middle">3999</text><rect x="667.9" y="946" width="15.2" height="12" fill="#000"/><text x="675.5" y="956" fill="#fff" text-anchor="middle">91</text><rect x="1494.8" y="114" width="27.5" height="12" fill="#000"/><text x="1508.5" y="124" fill="#fff" text-anchor="middle">6493</text><rect x="1497.8" y="184" width="21.4" height="12" fill="#000"/><text x="1508.5" y="194" fill="#fff" text-anchor="middle">100</text><rect x="1496.3" y="398" width="24.4" height="12" fill="#000"/><text x="1508.5" y="408" fill="#fff" text-anchor="middle">20.6</text><rect x="1500.9" y="547" width="15.2" height="12" fill="#000"/><text x="1508.5" y="557" fill="#fff" text-anchor="middle">72</text><rect x="1500.9" y="627" width="15.2" height="12" fill="#000"/><text x="1508.5" y="637" fill="#fff" text-anchor="middle">87</text><rect x="1494.8" y="783" width="27.5" height="12" fill="#000"/><text x="1508.5" y="793" fill="#fff" text-anchor="middle">1920</text><rect x="1494.8" y="969" width="27.5" height="12" fill="#000"/><text x="1508.5" y="979" fill="#fff" text-anchor="middle">4210</text></svg><div style="position:absolute;left:0;top:1032px;width:592px;height:1px;background:#d8d8d8"></div><div id="tb"><svg width="1920" height="40" style="position:absolute;left:0;top:0" font-family="'Liberation Sans', sans-serif"><path d="M16 13.5 L22.5 12.6 V19.5 H16 Z M23.5 12.5 L32 11.3 V19.5 H23.5 Z M16 20.5 H22.5 V27.4 L16 26.5 Z M23.5 20.5 H32 V28.7 L23.5 27.5 Z" fill="#fff"/><rect x="48" y="0" width="344" height="40" fill="#f2f2f2"/><circle cx="72" cy="17" r="5.2" fill="none" stroke="#222" stroke-width="1.4"/><path d="M68.3 20.8 L61 28" stroke="#222" stroke-width="1.6"/><text x="88.5" y="26" font-size="15" fill="#333">Чтобы начать поиск, введите здесь запрос</text><circle cx="416" cy="20" r="6.8" fill="none" stroke="#fff" stroke-width="2"/><path d="M456.5 11.5 V14.3 H466.5 V11.5 M456.5 28.5 V25.7 H466.5 V28.5 M470.5 11.5 V28.5" stroke="#fff" stroke-width="1.2" fill="none"/><rect x="456.6" y="17.1" width="9.8" height="5.6" fill="none" stroke="#fff" stroke-width="1.3"/><rect x="469" y="16" width="3" height="3" fill="#fff"/><path d="M505 14 C510 9.5 521 10 525 14.5 C527.5 18 524 22 519 24.5 C514 27 509 29 506 27.5 C503.5 26 507 22.5 505 21 C502 19 502 16.5 505 14 Z" fill="#bfe0f2" stroke="#7fb0d0" stroke-width="0.6"/><circle cx="507.5" cy="19.5" r="1.9" fill="#e04040"/><circle cx="510.5" cy="15.5" r="1.8" fill="#40b040"/><circle cx="515.5" cy="13.3" r="1.9" fill="#f0a020"/><circle cx="513" cy="21" r="1.1" fill="#1f1f1f"/><path d="M525.5 10 L514 31" stroke="#e8902a" stroke-width="1.8"/><path d="M524 9 L528 7 L527 12 Z" fill="#c89a60"/><g transform="translate(564,20) scale(0.5) translate(-114,-31)"><circle cx="114" cy="31" r="24" fill="#1a86dc"/><path d="M103.5 32 C103 41 108 47 116 48.5 C123 49.5 130 47 135 43.5 C130.5 51 122.5 55 114 55 C109 55 105 54 101.5 51.5 C100.5 45 101 37 103.5 32 Z" fill="#0f56a6"/><path d="M108.5 34 C110.5 41 116.5 45 124 45 C129 45 132.5 44.5 135.8 42.5 L139 36 L139 26 L118 27 Z" fill="#1f1f1f"/><path d="M90 31 A24 24 0 0 1 138 31 C138 36 134.5 38.5 129 38.5 C124 38.5 120.5 38 119.5 36.5 C121.5 34 121.5 28 117 24.5 C111 20 100 19.5 91.5 26.5 C90.8 27.8 90.3 29.3 90 31 Z" fill="url(#edgt)"/><ellipse cx="114" cy="32" rx="5.3" ry="6" fill="#1f1f1f"/></g><path d="M601 12 H610 L612 14 H624 V30 H601 Z" fill="#f3c84a"/><path d="M601 16 H624 V30 H601 Z" fill="#f8d775"/><path d="M607 24 H618 V30 H614 V27 H611 V30 H607 Z" fill="#2c86d8"/><rect x="650" y="14" width="23" height="17" rx="2" fill="#fff"/><path d="M656 14 C656 7.5 667 7.5 667 14" stroke="#fff" stroke-width="1.6" fill="none"/><rect x="655.5" y="17" width="5.5" height="5" fill="#f25022"/><rect x="662" y="17" width="5.5" height="5" fill="#7fba00"/><rect x="655.5" y="23" width="5.5" height="5" fill="#00a4ef"/><rect x="662" y="23" width="5.5" height="5" fill="#ffb900"/><path d="M699 16 L711 9.5 L723 16 V29 H699 Z" fill="#fff"/><path d="M701.5 17 H720.5 L710 21 L716 25" stroke="#1f1f1f" stroke-width="1.3" fill="none"/><rect x="751" y="8" width="18" height="24" fill="#fff"/><rect x="753" y="10" width="14" height="4.5" fill="#1f1f1f"/><path d="M753 16 h3 l-3 3 z" fill="#1f1f1f"/><path d="M753 21 h3 l-3 3 z" fill="#1f1f1f"/><path d="M753 26 h3 l-3 3 z" fill="#1f1f1f"/><path d="M758 16 h3 l-3 3 z" fill="#1f1f1f"/><path d="M758 21 h3 l-3 3 z" fill="#1f1f1f"/><path d="M758 26 h3 l-3 3 z" fill="#1f1f1f"/><path d="M763 16 h3 l-3 3 z" fill="#1f1f1f"/><path d="M763 21 h3 l-3 3 z" fill="#1f1f1f"/><path d="M763 26 h3 l-3 3 z" fill="#1f1f1f"/><defs><linearGradient id="edgt" x1="0" y1="0.2" x2="1" y2="0.8"><stop offset="0" stop-color="#2aa8ec"/><stop offset="0.5" stop-color="#2fc4c8"/><stop offset="1" stop-color="#6ad84a"/></linearGradient><linearGradient id="gem" x1="1" y1="0" x2="0" y2="1"><stop offset="0" stop-color="#2ee6f0"/><stop offset="0.4" stop-color="#7a6af0"/><stop offset="0.75" stop-color="#f0407a"/><stop offset="1" stop-color="#ffa020"/></linearGradient></defs><path d="M810 8 C815.5 8 818 12 818 16 C818 21 812 26 806 32 C807 28 800 23 800 17 C800 11.5 804.5 8 810 8 Z" fill="url(#gem)"/><defs><linearGradient id="npg" x1="0" y1="0" x2="1" y2="1"><stop offset="0" stop-color="#2a8aa8"/><stop offset="0.5" stop-color="#8fd0e6"/><stop offset="1" stop-color="#c8e8f2"/></linearGradient></defs><path d="M855 9 L866.5 11 L867.5 28 L864 30 L846 24.5 Z" fill="url(#npg)"/><path d="M866.5 11 L867.5 28 L864 30 L860 27 Z" fill="#e8eef0"/><path d="M867 12 L868 28" stroke="#d89a40" stroke-width="1"/><path d="M855 9 L866.5 11" stroke="#b8c4c8" stroke-width="1.4"/><rect x="593" y="38" width="31" height="2" fill="#e6efb4"/><rect x="624" y="38" width="9" height="2" fill="#b9c293"/><rect x="838" y="38" width="40" height="2" fill="#e6efb4"/><path d="M1675.5 23 L1681 17.5 L1686.5 23" stroke="#fff" stroke-width="1.3" fill="none"/><g transform="translate(1704.5,20) rotate(-45)"><path d="M0 -8.5 C1 -8.5 1.3 -7 1.3 -5 V-2 L7.5 2 V4 L1.3 1.8 V5.5 L3.5 7.3 V8.5 L0 7.5 L-3.5 8.5 V7.3 L-1.3 5.5 V1.8 L-7.5 4 V2 L-1.3 -2 V-5 C-1.3 -7 -1 -8.5 0 -8.5 Z" fill="#f0f0f0"/></g><circle cx="1729" cy="20" r="7.5" fill="none" stroke="#fff" stroke-width="1.2"/><ellipse cx="1729" cy="20" rx="3.2" ry="7.5" fill="none" stroke="#fff" stroke-width="1.1"/><path d="M1722 17.5 H1736 M1722 22.5 H1736" stroke="#fff" stroke-width="1"/><circle cx="1734" cy="25" r="3.4" fill="#1f1f1f" stroke="#fff" stroke-width="1.1"/><path d="M1731.8 27.2 L1736.2 22.8" stroke="#fff" stroke-width="1"/><path d="M1745.5 17.5 H1748 L1751.5 14 V26 L1748 22.5 H1745.5 Z" fill="none" stroke="#fff" stroke-width="1.1"/><path d="M1755.5 17 C1757 19 1757 21 1755.5 23 M1757.5 15 C1760 18 1760 22 1757.5 25 M1759.5 13 C1763 17 1763 23 1759.5 27" stroke="#fff" stroke-width="1.1" fill="none"/><text x="1772.5" y="24.5" font-size="12" letter-spacing="-0.5" fill="#fff">РУС</text><text x="1834" y="15.5" font-size="12" letter-spacing="-0.3" fill="#fff" text-anchor="middle">10:36</text><text x="1833.5" y="33.5" font-size="12" letter-spacing="-0.5" fill="#fff" text-anchor="middle">29.11.2023</text><path d="M1879.5 12.5 H1895.5 V25.5 H1886 L1882 29 V25.5 H1879.5 Z" fill="#fff"/><path d="M1882 16h11M1882 19h11M1882 22h8" stroke="#1f1f1f" stroke-width="1"/><circle cx="1894.5" cy="27" r="6.3" fill="#1f1f1f" stroke="#888" stroke-width="1.2"/><text x="1894.5" y="31" font-size="10" font-weight="bold" fill="#fff" text-anchor="middle">1</text><rect x="1915" y="0" width="1" height="40" fill="#555"/></svg></div></body></html>
